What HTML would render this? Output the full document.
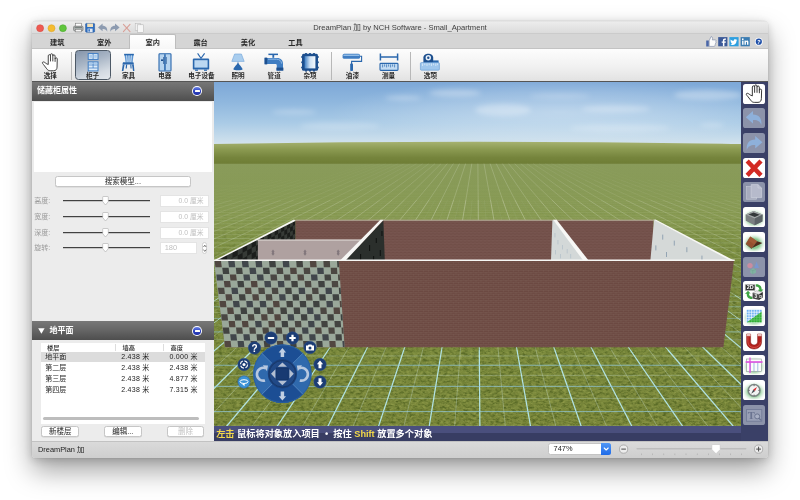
<!DOCTYPE html>
<html lang="zh-CN"><head><meta charset="utf-8"><title>DreamPlan 加 by NCH Software - Small_Apartment</title>
<style>
*{box-sizing:border-box;margin:0;padding:0}
html,body{width:800px;height:500px;overflow:hidden;background:#fff}
body{font-family:"Liberation Sans","Noto Sans CJK SC",sans-serif;position:relative;color:#222}
#win{position:absolute;left:32px;top:21px;width:736px;height:437px;border-radius:4px 4px 3px 3px;background:#ececec;
 box-shadow:0 0 0 0.5px rgba(0,0,0,.07),0 13px 27px rgba(0,0,0,.36),0 2px 10px rgba(0,0,0,.17);overflow:hidden;will-change:transform}
.abs{position:absolute}
#title{left:0;top:0;width:736px;height:13px;background:linear-gradient(#dedede,#ececec 9%,#ebebeb 14%,#dbdbdb);border-bottom:1px solid #cbcbcb}
#title .t{position:absolute;left:0;width:736px;top:2.4px;text-align:center;font-size:7.6px;color:#404040;line-height:10px;white-space:nowrap}
.tl{position:absolute;top:3.2px;width:7.4px;height:7.4px;border-radius:50%}
#tabs{left:0;top:13px;width:736px;height:15px;background:#d5d5d5;border-bottom:1px solid #c3c3c3}
.tab{position:absolute;top:0.5px;height:15px;width:46px;text-align:center;font-size:7.2px;font-weight:700;color:#2a2a2a;line-height:15.5px;white-space:nowrap}
.tab.on{background:linear-gradient(#fff,#f7f7f7);border:0.5px solid #bdbdbd;border-bottom:none;border-radius:2px 2px 0 0;top:0.4px;height:14.6px;line-height:15.6px}
#tools{z-index:5;left:0;top:28px;width:736px;height:33px;background:linear-gradient(#fdfdfd,#f1f1f1 55%,#e2e2e2);border-bottom:1px solid #555}
.tb{position:absolute;top:0;height:33px;width:36px;text-align:center}
.tb .lb{position:absolute;left:-10px;right:-10px;top:21.8px;font-size:6.6px;font-weight:700;color:#2c2c2c;line-height:9px;white-space:nowrap}
.tb svg{position:absolute;left:50%;top:3.9px;margin-left:-11px}
.tb.sel{top:1.2px;height:29.8px;border:1px solid #4d5966;border-radius:3.5px;background:linear-gradient(160deg,#8494aa 0%,#a9b6c6 40%,#d3dae2 75%,#e4e8ed 100%)}
.tb.sel svg{top:1.8px}.tb.sel .lb{top:19.7px}
.sep{position:absolute;top:2.6px;width:1px;height:28.6px;background:#b8b8b8}
#left{left:0;top:60px;width:182px;height:360px;background:#ececec}
.hdr{position:absolute;left:0;width:182px;height:19.5px;background:linear-gradient(#787878,#656565 50%,#4e4e4e);color:#fff;font-weight:700;font-size:8px;line-height:19.6px;padding-left:5px;white-space:nowrap}
.col{position:absolute;right:12px;top:5.1px;width:9.8px;height:9.8px;border-radius:50%;background:#fff}
.col i{position:absolute;left:1.1px;top:1.1px;width:7.6px;height:7.6px;border-radius:50%;background:linear-gradient(#6f86e6,#3148c4 45%,#1f2fa6)}
.col b{position:absolute;left:2.5px;top:3.9px;width:4.8px;height:2px;background:#fff;border-radius:0.5px}
#prev{left:2.4px;top:20.6px;width:177.6px;height:70.4px;background:#fff}
.btn{position:absolute;height:11px;border-radius:2.5px;background:#fff;border:0.5px solid #c6c6c6;box-shadow:0 0.5px 0.5px rgba(0,0,0,.12);font-size:7.5px;text-align:center;line-height:10px;color:#222;white-space:nowrap}
.btn.dis{color:#c2c2c2}
.row{position:absolute;left:0;width:182px;height:14px}
.row .l{position:absolute;left:2.2px;top:2px;font-size:7px;color:#9a9a9a;line-height:10px;white-space:nowrap}
.row .trk{position:absolute;left:31px;top:6px;width:86.5px;height:1px;background:#414141;box-shadow:0 1px 0 rgba(0,0,0,.16)}
.row .th{position:absolute;left:69.8px;top:2px;width:7px;height:10px}
.row .in{position:absolute;left:127.5px;top:1px;width:49.5px;height:11.6px;background:#fff;border:0.5px solid #e4e4e4;font-size:6.8px;color:#c0c0c0;text-align:right;padding-right:4.5px;line-height:10.8px;white-space:nowrap}
#tbl{left:8.6px;top:262px;width:164.4px;height:80.6px;background:#fff}
#tbl .h{position:absolute;top:0.4px;height:9px;font-size:6.2px;font-weight:500;color:#2a2a2a;line-height:9.5px;white-space:nowrap}
#tbl .r{position:absolute;left:0;width:164.4px;height:9.8px;font-size:7px;color:#1c1c1c;line-height:10px;white-space:nowrap}
#tbl .r span{position:absolute;top:0}
#view{left:182px;top:60px;width:527px;height:345px;background:#6f8036;overflow:hidden}
#info{left:182px;top:405px;width:554px;height:15px;background:linear-gradient(#4a4f7d,#4a4f7d 6.6px,#383d63 7.2px,#383d63);color:#fff;font-size:9.2px;font-weight:700;line-height:16.4px;white-space:nowrap;padding-left:2.2px}
#info em{font-style:normal;color:#f2d84a}
#rt{left:709px;top:60px;width:27px;height:360px;background:#3a4067}
.rb{position:absolute;left:1.6px;width:22.2px;height:20px;border-radius:2.6px;background:#fff;overflow:hidden}
.rb.dis{background:#8c93aa}
.rb svg{position:absolute;left:0;top:0}
#status{left:0;top:420px;width:736px;height:17px;background:linear-gradient(#dadada,#cecece);border-top:1px solid #c2c2c2;font-size:7.4px;color:#222;line-height:16px}
</style></head><body>
<div id="win"><div class="abs" style="left:0;top:0;width:736px;height:437px">
<div id="title" class="abs"><svg class="abs" style="left:0;top:0" width="40" height="13" viewBox="0 0 40 13"><circle cx="8.1" cy="7.2" r="3.5" fill="#ee5a52" stroke="#d7443d" stroke-width="0.5"/><circle cx="19.5" cy="7.2" r="3.5" fill="#f5bc30" stroke="#d9a023" stroke-width="0.5"/><circle cx="30.9" cy="7.2" r="3.5" fill="#5fc53c" stroke="#47a52a" stroke-width="0.5"/></svg><svg class="abs" style="left:38px;top:1px" width="80" height="12" viewBox="70 22 80 12"><rect x="75.3" y="23.2" width="6" height="3.4" fill="#fdfdfd" stroke="#777" stroke-width="0.6"/><rect x="73.6" y="26.2" width="9.4" height="4.6" rx="1" fill="#b9bcbc" stroke="#5c6060" stroke-width="0.6"/><rect x="75.2" y="29.3" width="6.2" height="2.6" fill="#f4f4f4" stroke="#6a6a6a" stroke-width="0.5"/><rect x="74.6" y="27.3" width="7.4" height="0.9" fill="#5d6a66"/><rect x="85.6" y="23.4" width="9" height="8.8" rx="0.8" fill="#2f6fc0" stroke="#1d4f96" stroke-width="0.5"/><rect x="87.2" y="23.6" width="5.8" height="3.4" fill="#f1dfb8"/><rect x="87.6" y="28.6" width="5" height="3.4" fill="#dfe8f4"/><rect x="88.4" y="29.2" width="1.5" height="2.4" fill="#2f6fc0"/><path d="M98 27.4 L102.6 23.6 V25.8 C106 25.8 107.6 28 107.2 31.8 C106.4 29.6 105 28.9 102.6 29 V31.2Z" fill="#8d9bb0"/><path d="M119.6 27.4 L115 23.6 V25.8 C111.6 25.8 110 28 110.4 31.8 C111.2 29.6 112.6 28.9 115 29 V31.2Z" fill="#8d9bb0"/><path d="M123.4 24.4 L130 31.6 M130 24.4 L123.4 31.6" stroke="#d9a199" stroke-width="1.1" stroke-linecap="round"/><rect x="135.2" y="23.4" width="5.4" height="7" fill="#f0f0f0" stroke="#b4b4b4" stroke-width="0.5"/><rect x="137.6" y="24.8" width="6" height="7.6" fill="#f6f6f6" stroke="#b0b0b0" stroke-width="0.5"/></svg><div class="t">DreamPlan 加 by NCH Software - Small_Apartment</div></div>
<div id="tabs" class="abs"><div class="tab" style="left:2.2px;width:46px">建筑</div><div class="tab" style="left:49.3px;width:46px">室外</div><div class="tab on" style="left:97.4px;width:46.6px">室内</div><div class="tab" style="left:145.6px;width:46px">露台</div><div class="tab" style="left:193.0px;width:46px">美化</div><div class="tab" style="left:240.4px;width:46px">工具</div><svg class="abs" style="left:672px;top:0.8px" width="62" height="13" viewBox="704 34.5 62 13"><rect x="706.2" y="40" width="2.6" height="6" fill="#4a66a8"/><path d="M709.2 40.2 L711 36.2 C712.6 35.9 712.8 37.6 712.3 39.4 H715.2 C716.2 39.5 716.3 40.6 715.8 41 C716.3 41.6 716.1 42.5 715.5 42.7 C715.8 43.4 715.5 44.1 715 44.3 C715.2 45.2 714.8 45.8 713.9 45.9 H709.2Z" fill="#fbfbfb" stroke="#7785a4" stroke-width="0.6"/><rect x="718.2" y="36.6" width="9.2" height="9.2" fill="#3b5998"/><path d="M724.4 45.8 V42.3 H725.7 L725.9 40.9 H724.4 V40 C724.4 39.5 724.6 39.3 725.1 39.3 H726 V38 C725.6 37.95 725.2 37.9 724.8 37.9 C723.6 37.9 722.9 38.6 722.9 39.8 V40.9 H721.7 V42.3 H722.9 V45.8Z" fill="#fff"/><rect x="729.4" y="36.6" width="9.2" height="9.2" fill="#2d9fe0"/><path d="M737.3 39.4 C737 39.55 736.7 39.6 736.4 39.65 C736.75 39.45 737 39.1 737.1 38.75 C736.8 38.95 736.45 39.05 736.1 39.15 C735.5 38.5 734.5 38.55 733.95 39.15 C733.6 39.55 733.5 40.05 733.6 40.5 C732.4 40.45 731.4 39.85 730.7 39 C730.3 39.7 730.5 40.5 731.15 40.95 C730.9 40.95 730.7 40.9 730.5 40.75 C730.5 41.5 731 42.1 731.7 42.25 C731.5 42.3 731.25 42.3 731.05 42.3 C731.25 42.9 731.8 43.3 732.4 43.3 C731.8 43.8 731.1 44 730.3 43.9 C732.9 45.5 736.6 44 736.55 40.3 C736.85 40.05 737.1 39.75 737.3 39.4Z" fill="#fff"/><rect x="740.6" y="36.6" width="9.2" height="9.2" fill="#3a7cb2"/><rect x="742.1" y="40.1" width="1.4" height="4.2" fill="#fff"/><circle cx="742.8" cy="38.7" r="0.85" fill="#fff"/><path d="M744.5 40.1 H745.8 V40.7 C746.3 39.8 748.4 39.6 748.4 41.6 V44.3 H747 V42 C747 40.9 745.9 41 745.9 42 V44.3 H744.5Z" fill="#fff"/><circle cx="758.8" cy="41.2" r="3.9" fill="#fff"/><circle cx="758.8" cy="41.2" r="3.1" fill="#1f4fa8"/><text x="758.8" y="43.3" font-family="Liberation Sans, sans-serif" font-size="5.6" font-weight="bold" font-style="italic" fill="#fff" text-anchor="middle">?</text></svg></div>
<div id="tools" class="abs"><div class="tb" style="left:0.3px"><svg width="22" height="19" viewBox="0 0 22 19"><g transform="translate(-0.7 -0.7) scale(1.06)"><path d="M7.4 10.6 C6.3 9.6 4.9 8.6 4.1 9.3 C3.4 10 4.3 10.9 5 11.7 L8 15.6 C8.8 16.8 9.8 17.4 11.2 17.4 H14.6 C16.6 17.4 17.6 16 17.7 14 L17.9 6.2 C17.9 4.9 16 4.9 15.9 6.2 L15.8 3.4 C15.7 2 13.7 2 13.7 3.4 V2.4 C13.6 1 11.5 1 11.5 2.4 V3.2 C11.4 1.9 9.4 1.9 9.4 3.3 L9.4 11.5Z M11.5 3 V8.6 M13.7 3.2 V8.6 M15.85 5.6 V9" fill="#fff" stroke="#3c3c3c" stroke-width="0.9" stroke-linejoin="round"/></g></svg><div class="lb">选择</div></div><div class="tb sel" style="left:42.6px"><svg width="22" height="19" viewBox="0 0 22 19"><rect x="6.2" y="0.6" width="9.8" height="5.8" fill="#dcebf8" stroke="#3d7cc4" stroke-width="1"/><path d="M11.1 0.8V6.2" stroke="#3d7cc4" stroke-width="0.8"/><rect x="7.4" y="2" width="2.6" height="2.8" fill="#a9cbed"/><rect x="12.2" y="2" width="2.6" height="2.8" fill="#a9cbed"/><rect x="6.2" y="8.9" width="9.8" height="9" fill="#dcebf8" stroke="#3d7cc4" stroke-width="1"/><path d="M6.6 12H15.6 M6.6 15H15.6 M11.1 9.2V15" stroke="#3d7cc4" stroke-width="0.75"/><rect x="7.3" y="10" width="2.8" height="1.2" fill="#a9cbed"/><rect x="12.1" y="10" width="2.8" height="1.2" fill="#a9cbed"/></svg><div class="lb">柜子</div></div><div class="tb" style="left:78.6px"><svg width="22" height="19" viewBox="0 0 22 19"><path d="M6.4 1 H15.6 L14.6 9.4 H7.6Z" fill="#5b95d2"/><path d="M6.2 0.8 H15.8 V2.4 H6.2Z" fill="#2a67ad"/><path d="M8.6 2.4 L9.2 9 M11 2.4 V9 M13.4 2.4 L12.8 9" stroke="#dbe9f7" stroke-width="0.9"/><path d="M5 9.2 H15.4 L16 11.4 H4.4Z" fill="#2a67ad"/><path d="M4.8 11.4 L3.8 18 H5.4 L6.6 11.4Z M14 11.4 L15 18 H16.4 L15.8 11.4Z M8 11.4 L7.6 15.4 H8.8 L9.2 11.4Z M12.2 11.4 L12.6 15.4 H13.6 L13.4 11.4Z" fill="#2a67ad"/></svg><div class="lb">家具</div></div><div class="tb" style="left:114.8px"><svg width="22" height="19" viewBox="0 0 22 19"><rect x="5" y="0.7" width="12" height="17.3" rx="0.8" fill="#b7d4ef" stroke="#2a67ad" stroke-width="1.1"/><rect x="10.2" y="1.2" width="1.5" height="16.4" fill="#2a67ad"/><rect x="7" y="6.4" width="2.2" height="1.6" fill="#1d4f8e"/><path d="M9.6 4V11 M12.3 4V11" stroke="#1d4f8e" stroke-width="0.7"/></svg><div class="lb">电器</div></div><div class="tb" style="left:151.4px"><svg width="22" height="19" viewBox="0 0 22 19"><path d="M7.6 0.4 L11 5.4 L14.6 0.4" fill="none" stroke="#2a67ad" stroke-width="1.1"/><rect x="2.8" y="5.6" width="16.4" height="11" rx="1.2" fill="#2a67ad"/><rect x="4.4" y="7.2" width="13.2" height="7.4" fill="#bcd8f2"/><rect x="5" y="16.6" width="3" height="1.2" fill="#2a67ad"/><rect x="14" y="16.6" width="3" height="1.2" fill="#2a67ad"/></svg><div class="lb">电子设备</div></div><div class="tb" style="left:188.0px"><svg width="22" height="19" viewBox="0 0 22 19"><path d="M7.6 1 H14.4 L17.2 8.4 H4.8Z" fill="#a9cdee" stroke="#6fa3d8" stroke-width="0.6"/><path d="M11 8.2 C11.4 11.8 15 13.6 15.6 16.2 C15.6 17.6 6.4 17.6 6.4 16.2 C7 13.6 10.6 11.8 11 8.2Z" fill="#2a67ad"/></svg><div class="lb">照明</div></div><div class="tb" style="left:224.2px"><svg width="22" height="19" viewBox="0 0 22 19"><rect x="5.4" y="0.6" width="9.6" height="1.5" fill="#2a67ad"/><rect x="9.4" y="1.8" width="1.8" height="3" fill="#2a67ad"/><path d="M1.6 5 H14 C18 5 20 7.4 20 11 V17.4 H13.8 V12.4 C13.8 11.4 13.2 11 12.2 11 H1.6Z" fill="#3f7dc2"/><rect x="1.6" y="4.6" width="2.6" height="6.8" fill="#1d4f8e"/><rect x="13.4" y="14.6" width="7" height="3" fill="#1d4f8e"/><path d="M5 6.2 H13.6 C16.6 6.2 18.4 8 18.6 10.6" fill="none" stroke="#8fb9e6" stroke-width="1"/></svg><div class="lb">管道</div></div><div class="tb" style="left:260.0px"><svg width="22" height="19" viewBox="0 0 22 19"><defs><linearGradient id="fg" x1="0" y1="0" x2="1" y2="0"><stop offset="0" stop-color="#3f7fc4"/><stop offset="0.5" stop-color="#cfe2f5"/><stop offset="1" stop-color="#f4f8fc"/></linearGradient></defs><rect x="3" y="0.8" width="16" height="17" rx="1.6" fill="#1d4f8e"/><g fill="#1d4f8e"><circle cx="3.2" cy="4" r="1.1"/><circle cx="3.2" cy="9.3" r="1.1"/><circle cx="3.2" cy="14.6" r="1.1"/><circle cx="18.8" cy="4" r="1.1"/><circle cx="18.8" cy="9.3" r="1.1"/><circle cx="18.8" cy="14.6" r="1.1"/><circle cx="7" cy="0.9" r="1"/><circle cx="11" cy="0.9" r="1"/><circle cx="15" cy="0.9" r="1"/><circle cx="7" cy="17.7" r="1"/><circle cx="11" cy="17.7" r="1"/><circle cx="15" cy="17.7" r="1"/></g><rect x="5.6" y="3.2" width="10.8" height="12.2" fill="url(#fg)"/></svg><div class="lb">杂项</div></div><div class="tb" style="left:302.4px"><svg width="22" height="19" viewBox="0 0 22 19"><rect x="1.6" y="0.8" width="17.4" height="5" rx="1.6" fill="#3f7dc2"/><rect x="2.4" y="1.6" width="15.8" height="1.3" fill="#9cc4ea"/><path d="M19 3.2 H20.6 V8.4 H10.6 V11" fill="none" stroke="#2a67ad" stroke-width="1.1"/><rect x="9.2" y="10.4" width="2.8" height="7.6" rx="0.8" fill="#2a67ad"/></svg><div class="lb">油漆</div></div><div class="tb" style="left:338.6px"><svg width="22" height="19" viewBox="0 0 22 19"><path d="M2.4 0.6 V7.4 M19.6 0.6 V7.4 M2.4 4 H19.6" fill="none" stroke="#2a67ad" stroke-width="1.5"/><rect x="2" y="10.4" width="18" height="7" rx="0.8" fill="#c3dcf3" stroke="#2a67ad" stroke-width="1.1"/><path d="M4.6 11.4V14.4 M6.6 11.4V13.6 M8.6 11.4V14.4 M10.6 11.4V13.6 M12.6 11.4V14.4 M14.6 11.4V13.6 M16.6 11.4V14.4" stroke="#2a67ad" stroke-width="0.7"/></svg><div class="lb">测量</div></div><div class="tb" style="left:380.4px"><svg width="22" height="19" viewBox="0 0 22 19"><path d="M4.4 10 V4.6 C4.4 -0.6 14.2 -0.6 14.2 4.6 V10Z" fill="#1d4f8e"/><circle cx="9.3" cy="4.7" r="2.7" fill="#e9f1fa"/><circle cx="9.3" cy="4.7" r="1.2" fill="#1d4f8e"/><rect x="14" y="7.4" width="5.6" height="2.8" fill="#2a67ad"/><rect x="1.4" y="9.6" width="19" height="7.6" rx="1" fill="#9fc6ec" stroke="#5f97d2" stroke-width="0.6"/><path d="M3.6 10.4V13 M5.8 10.4V12.2 M8 10.4V13 M10.2 10.4V12.2 M12.4 10.4V13 M14.6 10.4V12.2 M16.8 10.4V13 M18.6 10.4V12.2" stroke="#e8f2fb" stroke-width="0.7"/></svg><div class="lb">选项</div></div><div class="sep" style="left:39.3px"></div><div class="sep" style="left:299.3px"></div><div class="sep" style="left:377.6px"></div></div>
<div id="left" class="abs">
<div class="hdr" style="top:0">储藏柜属性<div class="col"><i></i><b></b></div></div>
<div id="prev" class="abs"></div>
<div class="btn" style="left:22.6px;top:95.2px;width:136.6px">搜索模型...</div>
<div class="row" style="top:113.0px"><span class="l">高度:</span><div class="trk"></div><svg class="th" viewBox="0 0 7 10"><path d="M1.4 0.5 H5.6 Q6.3 0.5 6.3 1.2 V5.6 L3.5 9 L0.7 5.6 V1.2 Q0.7 0.5 1.4 0.5Z" fill="#fff" stroke="#a3a3a3" stroke-width="0.55"/></svg><div class="in">0.0 厘米</div></div><div class="row" style="top:129.0px"><span class="l">宽度:</span><div class="trk"></div><svg class="th" viewBox="0 0 7 10"><path d="M1.4 0.5 H5.6 Q6.3 0.5 6.3 1.2 V5.6 L3.5 9 L0.7 5.6 V1.2 Q0.7 0.5 1.4 0.5Z" fill="#fff" stroke="#a3a3a3" stroke-width="0.55"/></svg><div class="in">0.0 厘米</div></div><div class="row" style="top:145.0px"><span class="l">深度:</span><div class="trk"></div><svg class="th" viewBox="0 0 7 10"><path d="M1.4 0.5 H5.6 Q6.3 0.5 6.3 1.2 V5.6 L3.5 9 L0.7 5.6 V1.2 Q0.7 0.5 1.4 0.5Z" fill="#fff" stroke="#a3a3a3" stroke-width="0.55"/></svg><div class="in">0.0 厘米</div></div><div class="row" style="top:160.0px"><span class="l">旋转:</span><div class="trk"></div><svg class="th" viewBox="0 0 7 10"><path d="M1.4 0.5 H5.6 Q6.3 0.5 6.3 1.2 V5.6 L3.5 9 L0.7 5.6 V1.2 Q0.7 0.5 1.4 0.5Z" fill="#fff" stroke="#a3a3a3" stroke-width="0.55"/></svg><div class="in" style="width:37.5px;text-align:left;padding-left:4.2px;font-size:7.5px">180</div><div class="abs" style="left:169.6px;top:0.6px;width:5.6px;height:12.4px;border-radius:2.8px;background:#fff;border:0.5px solid #cfcfcf"></div><svg class="abs" style="left:169.6px;top:0.6px" width="5.6" height="12.4" viewBox="0 0 5.6 12.4"><path d="M1.5 5 L2.8 3.2 L4.1 5 M1.5 7.6 L2.8 9.4 L4.1 7.6" fill="none" stroke="#555" stroke-width="0.8"/></svg></div>
<div class="hdr" style="top:240px;height:19px;line-height:19px;padding-left:7px"><svg class="abs" style="left:5.6px;top:6.6px" width="7" height="6" viewBox="0 0 7 6"><path d="M0.2 0.3 H6.6 L3.4 5.7Z" fill="#fff"/></svg><span style="position:absolute;left:17.4px">地平面</span><div class="col"><i></i><b></b></div></div>
<div id="tbl" class="abs"><span class="h" style="left:6.4px">楼层</span><span class="h" style="left:82px">墙高</span><span class="h" style="left:130px">高度</span><div class="abs" style="left:74.6px;top:1.4px;width:0.6px;height:7px;background:#ddd"></div><div class="abs" style="left:122.6px;top:1.4px;width:0.6px;height:7px;background:#ddd"></div><div class="r" style="top:9.40px;background:#dcdcdc;"><span style="left:4.6px">地平面</span><span style="left:80.6px;letter-spacing:0.28px">2.438 米</span><span style="left:128.8px;letter-spacing:0.28px">0.000 米</span></div><div class="r" style="top:20.40px;"><span style="left:4.6px">第二层</span><span style="left:80.6px;letter-spacing:0.28px">2.438 米</span><span style="left:128.8px;letter-spacing:0.28px">2.438 米</span></div><div class="r" style="top:31.40px;"><span style="left:4.6px">第三层</span><span style="left:80.6px;letter-spacing:0.28px">2.438 米</span><span style="left:128.8px;letter-spacing:0.28px">4.877 米</span></div><div class="r" style="top:42.40px;"><span style="left:4.6px">第四层</span><span style="left:80.6px;letter-spacing:0.28px">2.438 米</span><span style="left:128.8px;letter-spacing:0.28px">7.315 米</span></div><div class="abs" style="left:2px;top:73.6px;width:156px;height:3.6px;border-radius:2px;background:#bdbdbd"></div></div>
<div class="btn" style="left:9px;top:344.6px;width:38.4px">新楼层</div>
<div class="btn" style="left:71.6px;top:344.6px;width:38.4px">编辑...</div>
<div class="btn dis" style="left:134.6px;top:344.6px;width:37.6px">删除</div>
</div>
<div id="view" class="abs"><svg id="scene" width="527" height="346" viewBox="214 81 527 346">
<defs>
<linearGradient id="sky" x1="0" y1="0" x2="0" y2="1">
<stop offset="0" stop-color="#7ca7d7"/><stop offset="0.3" stop-color="#8fb7de"/><stop offset="0.6" stop-color="#aacbe6"/><stop offset="0.85" stop-color="#ccdfec"/><stop offset="1" stop-color="#e0e9ee"/>
</linearGradient>
<radialGradient id="hz" cx="0.5" cy="0.5" r="0.5"><stop offset="0" stop-color="#fff" stop-opacity="0.34"/><stop offset="0.6" stop-color="#fff" stop-opacity="0.16"/><stop offset="1" stop-color="#fff" stop-opacity="0"/></radialGradient>
<linearGradient id="grassfar" x1="0" y1="0" x2="0" y2="1">
<stop offset="0" stop-color="#a6b270"/><stop offset="0.3" stop-color="#8c9b52"/><stop offset="0.65" stop-color="#75843c"/><stop offset="1" stop-color="#6c7b33"/>
</linearGradient>
<linearGradient id="grass" x1="0" y1="0" x2="0" y2="1">
<stop offset="0" stop-color="#798d44"/><stop offset="0.2" stop-color="#7e9245"/><stop offset="0.42" stop-color="#7a8c3f"/><stop offset="1" stop-color="#79863a"/>
</linearGradient>
<filter id="blur3" x="-20%" y="-50%" width="140%" height="200%"><feGaussianBlur stdDeviation="2.6"/></filter>
<filter id="gnoise" x="0" y="0" width="100%" height="100%" color-interpolation-filters="sRGB">
<feTurbulence type="fractalNoise" baseFrequency="0.22 0.42" numOctaves="3" seed="7" result="n"/>
<feColorMatrix in="n" type="matrix" values="0 0 0 0 0.30  0 0 0 0 0.37  0 0 0 0 0.12  2.6 1.4 0 0 -1.75"/>
</filter>
<filter id="gnoise2" x="0" y="0" width="100%" height="100%" color-interpolation-filters="sRGB">
<feTurbulence type="fractalNoise" baseFrequency="0.3 0.5" numOctaves="2" seed="21" result="n"/>
<feColorMatrix in="n" type="matrix" values="0 0 0 0 0.62  0 0 0 0 0.66  0 0 0 0 0.33  0 2.4 1.2 0 -1.6"/>
</filter>
<linearGradient id="haze" x1="0" y1="0" x2="0" y2="1"><stop offset="0" stop-color="#dfe6d2" stop-opacity="0.16"/><stop offset="0.6" stop-color="#dfe6d2" stop-opacity="0.08"/><stop offset="1" stop-color="#dfe6d2" stop-opacity="0"/></linearGradient>
<linearGradient id="fade" x1="0" y1="0" x2="0" y2="1"><stop offset="0" stop-color="#fff" stop-opacity="0"/><stop offset="0.45" stop-color="#fff" stop-opacity="0.75"/><stop offset="1" stop-color="#fff" stop-opacity="1"/></linearGradient>
<mask id="fm" maskUnits="userSpaceOnUse" x="214" y="200" width="527" height="227"><rect x="214" y="200" width="527" height="227" fill="url(#fade)"/></mask>
<pattern id="brick" width="5" height="4" patternUnits="userSpaceOnUse">
<rect width="5" height="4" fill="#6c4942"/>
<path d="M0 0.3H5M0 2.3H5" stroke="#85675e" stroke-width="0.5" opacity="0.6"/>
<path d="M1 0V2M3.5 2V4" stroke="#80635b" stroke-width="0.5" opacity="0.5"/>
</pattern>
<pattern id="brickb" width="4" height="3.2" patternUnits="userSpaceOnUse">
<rect width="4" height="3.2" fill="#6f4c46"/>
<path d="M0 0.3H4M0 1.9H4" stroke="#87685f" stroke-width="0.45" opacity="0.65"/>
<path d="M1 0V1.6M3 1.6V3.2" stroke="#83655c" stroke-width="0.45" opacity="0.5"/>
</pattern>
</defs>
<rect x="214" y="81" width="527" height="70" fill="url(#sky)"/>
<ellipse cx="560" cy="112" rx="230" ry="34" fill="url(#hz)"/>
<g filter="url(#blur3)" fill="#fff">
<ellipse cx="403" cy="98" rx="18" ry="2.2" opacity="0.3"/>
<ellipse cx="294" cy="112" rx="22" ry="2.6" opacity="0.25"/>
<ellipse cx="455" cy="93" rx="26" ry="3.5" opacity="0.3"/>
<ellipse cx="503" cy="110" rx="28" ry="6" opacity="0.3"/>
<ellipse cx="616" cy="109" rx="34" ry="3.6" opacity="0.28"/>
<ellipse cx="708" cy="95" rx="34" ry="5" opacity="0.3"/>
<ellipse cx="712" cy="125" rx="12" ry="2" opacity="0.25"/>
<ellipse cx="560" cy="96" rx="30" ry="3" opacity="0.18"/>
<ellipse cx="340" cy="126" rx="40" ry="4" opacity="0.2"/>
<ellipse cx="620" cy="128" rx="50" ry="4" opacity="0.2"/>
</g>
<path d="M214 144 Q477 139.5 741 144 V166 H214Z" fill="url(#grassfar)"/>
<rect x="214" y="164" width="527" height="263" fill="url(#grass)"/>
<g mask="url(#fm)"><rect x="214" y="200" width="527" height="227" filter="url(#gnoise)" opacity="0.8"/><rect x="214" y="200" width="527" height="227" filter="url(#gnoise2)" opacity="0.55"/></g>
<rect x="214" y="163.6" width="527" height="90" fill="url(#haze)"/>
<g fill="none"><line x1="255.4" y1="180" x2="170.7" y2="200" stroke="#f0f4e8" stroke-width="0.60" opacity="0.04"/><line x1="264.3" y1="180" x2="183.0" y2="200" stroke="#f0f4e8" stroke-width="0.60" opacity="0.05"/><line x1="273.2" y1="180" x2="195.3" y2="200" stroke="#f0f4e8" stroke-width="0.60" opacity="0.05"/><line x1="282.1" y1="180" x2="207.6" y2="200" stroke="#f0f4e8" stroke-width="0.60" opacity="0.06"/><line x1="291.0" y1="180" x2="219.9" y2="200" stroke="#f0f4e8" stroke-width="0.60" opacity="0.06"/><line x1="219.9" y1="200" x2="155.9" y2="218" stroke="#eef3e6" stroke-width="0.70" opacity="0.13"/><line x1="299.9" y1="180" x2="232.2" y2="200" stroke="#f0f4e8" stroke-width="0.60" opacity="0.07"/><line x1="232.2" y1="200" x2="171.3" y2="218" stroke="#eef3e6" stroke-width="0.70" opacity="0.14"/><line x1="308.8" y1="180" x2="244.5" y2="200" stroke="#f0f4e8" stroke-width="0.60" opacity="0.07"/><line x1="244.5" y1="200" x2="186.6" y2="218" stroke="#eef3e6" stroke-width="0.70" opacity="0.15"/><line x1="367.7" y1="163.6" x2="317.7" y2="180" stroke="#f0f4e8" stroke-width="0.60" opacity="0.04"/><line x1="317.7" y1="180" x2="256.8" y2="200" stroke="#f0f4e8" stroke-width="0.60" opacity="0.08"/><line x1="256.8" y1="200" x2="202.0" y2="218" stroke="#eef3e6" stroke-width="0.70" opacity="0.16"/><line x1="373.8" y1="163.6" x2="326.6" y2="180" stroke="#f0f4e8" stroke-width="0.60" opacity="0.05"/><line x1="326.6" y1="180" x2="269.1" y2="200" stroke="#f0f4e8" stroke-width="0.60" opacity="0.09"/><line x1="269.1" y1="200" x2="217.3" y2="218" stroke="#eef3e6" stroke-width="0.70" opacity="0.18"/><line x1="217.3" y1="218" x2="168.4" y2="235" stroke="#eef3e6" stroke-width="0.70" opacity="0.23"/><line x1="379.9" y1="163.6" x2="335.5" y2="180" stroke="#f0f4e8" stroke-width="0.60" opacity="0.06"/><line x1="335.5" y1="180" x2="281.4" y2="200" stroke="#f0f4e8" stroke-width="0.60" opacity="0.10"/><line x1="281.4" y1="200" x2="232.7" y2="218" stroke="#eef3e6" stroke-width="0.70" opacity="0.20"/><line x1="232.7" y1="218" x2="186.7" y2="235" stroke="#eef3e6" stroke-width="0.70" opacity="0.25"/><line x1="386.0" y1="163.6" x2="344.4" y2="180" stroke="#f0f4e8" stroke-width="0.60" opacity="0.07"/><line x1="344.4" y1="180" x2="293.7" y2="200" stroke="#f0f4e8" stroke-width="0.60" opacity="0.11"/><line x1="293.7" y1="200" x2="248.0" y2="218" stroke="#eef3e6" stroke-width="0.70" opacity="0.22"/><line x1="248.0" y1="218" x2="204.9" y2="235" stroke="#eef3e6" stroke-width="0.70" opacity="0.26"/><line x1="214.0" y1="235" x2="177.2" y2="250" stroke="#d8f0ee" stroke-width="0.48" opacity="0.05"/><line x1="392.1" y1="163.6" x2="353.3" y2="180" stroke="#f0f4e8" stroke-width="0.60" opacity="0.07"/><line x1="353.3" y1="180" x2="306.0" y2="200" stroke="#f0f4e8" stroke-width="0.60" opacity="0.13"/><line x1="306.0" y1="200" x2="263.4" y2="218" stroke="#eef3e6" stroke-width="0.70" opacity="0.24"/><line x1="263.4" y1="218" x2="223.1" y2="235" stroke="#eef3e6" stroke-width="0.70" opacity="0.26"/><line x1="223.1" y1="235" x2="187.6" y2="250" stroke="#e3f0e6" stroke-width="0.80" opacity="0.29"/><line x1="232.3" y1="235" x2="198.0" y2="250" stroke="#d8f0ee" stroke-width="0.48" opacity="0.05"/><line x1="398.3" y1="163.6" x2="362.2" y2="180" stroke="#f0f4e8" stroke-width="0.60" opacity="0.09"/><line x1="362.2" y1="180" x2="318.3" y2="200" stroke="#f0f4e8" stroke-width="0.60" opacity="0.14"/><line x1="318.3" y1="200" x2="278.7" y2="218" stroke="#eef3e6" stroke-width="0.70" opacity="0.27"/><line x1="278.7" y1="218" x2="241.4" y2="235" stroke="#eef3e6" stroke-width="0.70" opacity="0.27"/><line x1="241.4" y1="235" x2="208.4" y2="250" stroke="#e3f0e6" stroke-width="0.80" opacity="0.29"/><line x1="286.4" y1="218" x2="250.5" y2="235" stroke="#d8f0ee" stroke-width="0.42" opacity="0.04"/><line x1="250.5" y1="235" x2="218.8" y2="250" stroke="#d8f0ee" stroke-width="0.48" opacity="0.06"/><line x1="218.8" y1="250" x2="187.1" y2="265" stroke="#d8f0ee" stroke-width="0.48" opacity="0.07"/><line x1="404.4" y1="163.6" x2="371.1" y2="180" stroke="#f0f4e8" stroke-width="0.60" opacity="0.10"/><line x1="371.1" y1="180" x2="330.6" y2="200" stroke="#f0f4e8" stroke-width="0.60" opacity="0.16"/><line x1="330.6" y1="200" x2="294.1" y2="218" stroke="#eef3e6" stroke-width="0.70" opacity="0.28"/><line x1="294.1" y1="218" x2="259.6" y2="235" stroke="#eef3e6" stroke-width="0.70" opacity="0.28"/><line x1="259.6" y1="235" x2="229.2" y2="250" stroke="#e3f0e6" stroke-width="0.80" opacity="0.30"/><line x1="229.2" y1="250" x2="198.8" y2="265" stroke="#e3f0e6" stroke-width="0.80" opacity="0.30"/><line x1="301.8" y1="218" x2="268.7" y2="235" stroke="#d8f0ee" stroke-width="0.42" opacity="0.05"/><line x1="268.7" y1="235" x2="239.6" y2="250" stroke="#d8f0ee" stroke-width="0.48" opacity="0.07"/><line x1="239.6" y1="250" x2="210.4" y2="265" stroke="#d8f0ee" stroke-width="0.48" opacity="0.08"/><line x1="410.5" y1="163.6" x2="380.0" y2="180" stroke="#f0f4e8" stroke-width="0.60" opacity="0.11"/><line x1="380.0" y1="180" x2="342.9" y2="200" stroke="#f0f4e8" stroke-width="0.60" opacity="0.18"/><line x1="342.9" y1="200" x2="309.4" y2="218" stroke="#eef3e6" stroke-width="0.70" opacity="0.29"/><line x1="309.4" y1="218" x2="277.8" y2="235" stroke="#eef3e6" stroke-width="0.70" opacity="0.29"/><line x1="277.8" y1="235" x2="250.0" y2="250" stroke="#e3f0e6" stroke-width="0.80" opacity="0.32"/><line x1="250.0" y1="250" x2="222.1" y2="265" stroke="#e3f0e6" stroke-width="0.80" opacity="0.32"/><line x1="222.1" y1="265" x2="194.2" y2="280" stroke="#cdeeea" stroke-width="0.85" opacity="0.33"/><line x1="349.0" y1="200" x2="317.1" y2="218" stroke="#d8f0ee" stroke-width="0.42" opacity="0.04"/><line x1="317.1" y1="218" x2="287.0" y2="235" stroke="#d8f0ee" stroke-width="0.42" opacity="0.06"/><line x1="287.0" y1="235" x2="260.4" y2="250" stroke="#d8f0ee" stroke-width="0.48" opacity="0.08"/><line x1="260.4" y1="250" x2="233.8" y2="265" stroke="#d8f0ee" stroke-width="0.48" opacity="0.09"/><line x1="233.8" y1="265" x2="207.2" y2="280" stroke="#d8f0ee" stroke-width="0.51" opacity="0.10"/><line x1="416.6" y1="163.6" x2="388.9" y2="180" stroke="#f0f4e8" stroke-width="0.60" opacity="0.13"/><line x1="388.9" y1="180" x2="355.2" y2="200" stroke="#f0f4e8" stroke-width="0.60" opacity="0.21"/><line x1="355.2" y1="200" x2="324.8" y2="218" stroke="#eef3e6" stroke-width="0.70" opacity="0.30"/><line x1="324.8" y1="218" x2="296.1" y2="235" stroke="#eef3e6" stroke-width="0.70" opacity="0.30"/><line x1="296.1" y1="235" x2="270.7" y2="250" stroke="#e3f0e6" stroke-width="0.80" opacity="0.33"/><line x1="270.7" y1="250" x2="245.4" y2="265" stroke="#e3f0e6" stroke-width="0.80" opacity="0.33"/><line x1="245.4" y1="265" x2="220.1" y2="280" stroke="#cdeeea" stroke-width="0.85" opacity="0.34"/><line x1="220.1" y1="280" x2="194.8" y2="295" stroke="#cdeeea" stroke-width="0.85" opacity="0.34"/><line x1="361.3" y1="200" x2="332.5" y2="218" stroke="#d8f0ee" stroke-width="0.42" opacity="0.05"/><line x1="332.5" y1="218" x2="305.2" y2="235" stroke="#d8f0ee" stroke-width="0.42" opacity="0.07"/><line x1="305.2" y1="235" x2="281.1" y2="250" stroke="#d8f0ee" stroke-width="0.48" opacity="0.09"/><line x1="281.1" y1="250" x2="257.1" y2="265" stroke="#d8f0ee" stroke-width="0.48" opacity="0.10"/><line x1="257.1" y1="265" x2="233.0" y2="280" stroke="#d8f0ee" stroke-width="0.51" opacity="0.10"/><line x1="233.0" y1="280" x2="209.0" y2="295" stroke="#d8f0ee" stroke-width="0.51" opacity="0.10"/><line x1="422.8" y1="163.6" x2="397.9" y2="180" stroke="#f0f4e8" stroke-width="0.60" opacity="0.15"/><line x1="397.9" y1="180" x2="367.5" y2="200" stroke="#f0f4e8" stroke-width="0.60" opacity="0.23"/><line x1="367.5" y1="200" x2="340.1" y2="218" stroke="#eef3e6" stroke-width="0.70" opacity="0.32"/><line x1="340.1" y1="218" x2="314.3" y2="235" stroke="#eef3e6" stroke-width="0.70" opacity="0.32"/><line x1="314.3" y1="235" x2="291.5" y2="250" stroke="#e3f0e6" stroke-width="0.80" opacity="0.34"/><line x1="291.5" y1="250" x2="268.7" y2="265" stroke="#e3f0e6" stroke-width="0.80" opacity="0.34"/><line x1="268.7" y1="265" x2="246.0" y2="280" stroke="#cdeeea" stroke-width="0.85" opacity="0.36"/><line x1="246.0" y1="280" x2="223.2" y2="295" stroke="#cdeeea" stroke-width="0.85" opacity="0.36"/><line x1="223.2" y1="295" x2="200.4" y2="310" stroke="#c2eef0" stroke-width="0.95" opacity="0.70"/><line x1="373.6" y1="200" x2="347.8" y2="218" stroke="#d8f0ee" stroke-width="0.42" opacity="0.06"/><line x1="347.8" y1="218" x2="323.4" y2="235" stroke="#d8f0ee" stroke-width="0.42" opacity="0.08"/><line x1="323.4" y1="235" x2="301.9" y2="250" stroke="#d8f0ee" stroke-width="0.48" opacity="0.10"/><line x1="301.9" y1="250" x2="280.4" y2="265" stroke="#d8f0ee" stroke-width="0.48" opacity="0.11"/><line x1="280.4" y1="265" x2="258.9" y2="280" stroke="#d8f0ee" stroke-width="0.51" opacity="0.11"/><line x1="258.9" y1="280" x2="237.4" y2="295" stroke="#d8f0ee" stroke-width="0.51" opacity="0.11"/><line x1="237.4" y1="295" x2="215.9" y2="310" stroke="#d8f0ee" stroke-width="0.57" opacity="0.21"/><line x1="215.9" y1="310" x2="194.4" y2="325" stroke="#d8f0ee" stroke-width="0.57" opacity="0.21"/><line x1="428.9" y1="163.6" x2="406.8" y2="180" stroke="#f0f4e8" stroke-width="0.60" opacity="0.18"/><line x1="406.8" y1="180" x2="379.8" y2="200" stroke="#f0f4e8" stroke-width="0.60" opacity="0.24"/><line x1="379.8" y1="200" x2="355.5" y2="218" stroke="#eef3e6" stroke-width="0.70" opacity="0.33"/><line x1="355.5" y1="218" x2="332.5" y2="235" stroke="#eef3e6" stroke-width="0.70" opacity="0.33"/><line x1="332.5" y1="235" x2="312.3" y2="250" stroke="#e3f0e6" stroke-width="0.80" opacity="0.36"/><line x1="312.3" y1="250" x2="292.1" y2="265" stroke="#e3f0e6" stroke-width="0.80" opacity="0.36"/><line x1="292.1" y1="265" x2="271.8" y2="280" stroke="#cdeeea" stroke-width="0.85" opacity="0.37"/><line x1="271.8" y1="280" x2="251.6" y2="295" stroke="#cdeeea" stroke-width="0.85" opacity="0.37"/><line x1="251.6" y1="295" x2="231.3" y2="310" stroke="#c2eef0" stroke-width="0.95" opacity="0.70"/><line x1="231.3" y1="310" x2="211.1" y2="325" stroke="#c2eef0" stroke-width="0.95" opacity="0.70"/><line x1="385.9" y1="200" x2="363.2" y2="218" stroke="#d8f0ee" stroke-width="0.42" opacity="0.07"/><line x1="363.2" y1="218" x2="341.7" y2="235" stroke="#d8f0ee" stroke-width="0.42" opacity="0.09"/><line x1="341.7" y1="235" x2="322.7" y2="250" stroke="#d8f0ee" stroke-width="0.48" opacity="0.11"/><line x1="322.7" y1="250" x2="303.7" y2="265" stroke="#d8f0ee" stroke-width="0.48" opacity="0.11"/><line x1="303.7" y1="265" x2="284.8" y2="280" stroke="#d8f0ee" stroke-width="0.51" opacity="0.11"/><line x1="284.8" y1="280" x2="265.8" y2="295" stroke="#d8f0ee" stroke-width="0.51" opacity="0.11"/><line x1="265.8" y1="295" x2="246.8" y2="310" stroke="#d8f0ee" stroke-width="0.57" opacity="0.21"/><line x1="246.8" y1="310" x2="227.9" y2="325" stroke="#d8f0ee" stroke-width="0.57" opacity="0.21"/><line x1="227.9" y1="325" x2="196.2" y2="350" stroke="#d8f0ee" stroke-width="0.66" opacity="0.35"/><line x1="435.0" y1="163.6" x2="415.7" y2="180" stroke="#f0f4e8" stroke-width="0.60" opacity="0.21"/><line x1="415.7" y1="180" x2="392.1" y2="200" stroke="#f0f4e8" stroke-width="0.60" opacity="0.26"/><line x1="392.1" y1="200" x2="370.8" y2="218" stroke="#eef3e6" stroke-width="0.70" opacity="0.35"/><line x1="370.8" y1="218" x2="350.8" y2="235" stroke="#eef3e6" stroke-width="0.70" opacity="0.35"/><line x1="350.8" y1="235" x2="333.1" y2="250" stroke="#e3f0e6" stroke-width="0.80" opacity="0.38"/><line x1="333.1" y1="250" x2="315.4" y2="265" stroke="#e3f0e6" stroke-width="0.80" opacity="0.38"/><line x1="315.4" y1="265" x2="297.7" y2="280" stroke="#cdeeea" stroke-width="0.85" opacity="0.39"/><line x1="297.7" y1="280" x2="280.0" y2="295" stroke="#cdeeea" stroke-width="0.85" opacity="0.39"/><line x1="280.0" y1="295" x2="262.3" y2="310" stroke="#c2eef0" stroke-width="0.95" opacity="0.70"/><line x1="262.3" y1="310" x2="244.6" y2="325" stroke="#c2eef0" stroke-width="0.95" opacity="0.70"/><line x1="244.6" y1="325" x2="215.1" y2="350" stroke="#b9ebf1" stroke-width="1.10" opacity="0.84"/><line x1="215.1" y1="350" x2="120.7" y2="430" stroke="#b6eaf2" stroke-width="1.25" opacity="0.92"/><line x1="398.2" y1="200" x2="378.5" y2="218" stroke="#d8f0ee" stroke-width="0.42" opacity="0.08"/><line x1="378.5" y1="218" x2="359.9" y2="235" stroke="#d8f0ee" stroke-width="0.42" opacity="0.11"/><line x1="359.9" y1="235" x2="343.5" y2="250" stroke="#d8f0ee" stroke-width="0.48" opacity="0.12"/><line x1="343.5" y1="250" x2="327.0" y2="265" stroke="#d8f0ee" stroke-width="0.48" opacity="0.12"/><line x1="327.0" y1="265" x2="310.6" y2="280" stroke="#d8f0ee" stroke-width="0.51" opacity="0.12"/><line x1="310.6" y1="280" x2="294.2" y2="295" stroke="#d8f0ee" stroke-width="0.51" opacity="0.12"/><line x1="294.2" y1="295" x2="277.8" y2="310" stroke="#d8f0ee" stroke-width="0.57" opacity="0.21"/><line x1="277.8" y1="310" x2="261.4" y2="325" stroke="#d8f0ee" stroke-width="0.57" opacity="0.21"/><line x1="261.4" y1="325" x2="234.0" y2="350" stroke="#d8f0ee" stroke-width="0.66" opacity="0.35"/><line x1="234.0" y1="350" x2="146.4" y2="430" stroke="#d8f0ee" stroke-width="0.75" opacity="0.39"/><line x1="441.1" y1="163.6" x2="424.6" y2="180" stroke="#f0f4e8" stroke-width="0.60" opacity="0.24"/><line x1="424.6" y1="180" x2="404.4" y2="200" stroke="#f0f4e8" stroke-width="0.60" opacity="0.27"/><line x1="404.4" y1="200" x2="386.2" y2="218" stroke="#eef3e6" stroke-width="0.70" opacity="0.36"/><line x1="386.2" y1="218" x2="369.0" y2="235" stroke="#eef3e6" stroke-width="0.70" opacity="0.36"/><line x1="369.0" y1="235" x2="353.9" y2="250" stroke="#e3f0e6" stroke-width="0.80" opacity="0.40"/><line x1="353.9" y1="250" x2="338.7" y2="265" stroke="#e3f0e6" stroke-width="0.80" opacity="0.40"/><line x1="338.7" y1="265" x2="323.6" y2="280" stroke="#cdeeea" stroke-width="0.85" opacity="0.41"/><line x1="323.6" y1="280" x2="308.4" y2="295" stroke="#cdeeea" stroke-width="0.85" opacity="0.41"/><line x1="308.4" y1="295" x2="293.3" y2="310" stroke="#c2eef0" stroke-width="0.95" opacity="0.70"/><line x1="293.3" y1="310" x2="278.1" y2="325" stroke="#c2eef0" stroke-width="0.95" opacity="0.70"/><line x1="278.1" y1="325" x2="252.9" y2="350" stroke="#b9ebf1" stroke-width="1.10" opacity="0.84"/><line x1="252.9" y1="350" x2="172.0" y2="430" stroke="#b6eaf2" stroke-width="1.25" opacity="0.92"/><line x1="410.5" y1="200" x2="393.9" y2="218" stroke="#d8f0ee" stroke-width="0.42" opacity="0.10"/><line x1="393.9" y1="218" x2="378.1" y2="235" stroke="#d8f0ee" stroke-width="0.42" opacity="0.11"/><line x1="378.1" y1="235" x2="364.3" y2="250" stroke="#d8f0ee" stroke-width="0.48" opacity="0.12"/><line x1="364.3" y1="250" x2="350.4" y2="265" stroke="#d8f0ee" stroke-width="0.48" opacity="0.12"/><line x1="350.4" y1="265" x2="336.5" y2="280" stroke="#d8f0ee" stroke-width="0.51" opacity="0.13"/><line x1="336.5" y1="280" x2="322.6" y2="295" stroke="#d8f0ee" stroke-width="0.51" opacity="0.13"/><line x1="322.6" y1="295" x2="308.7" y2="310" stroke="#d8f0ee" stroke-width="0.57" opacity="0.21"/><line x1="308.7" y1="310" x2="294.9" y2="325" stroke="#d8f0ee" stroke-width="0.57" opacity="0.21"/><line x1="294.9" y1="325" x2="271.7" y2="350" stroke="#d8f0ee" stroke-width="0.66" opacity="0.35"/><line x1="271.7" y1="350" x2="197.7" y2="430" stroke="#d8f0ee" stroke-width="0.75" opacity="0.39"/><line x1="447.3" y1="163.6" x2="433.5" y2="180" stroke="#f0f4e8" stroke-width="0.60" opacity="0.28"/><line x1="433.5" y1="180" x2="416.7" y2="200" stroke="#f0f4e8" stroke-width="0.60" opacity="0.28"/><line x1="416.7" y1="200" x2="401.5" y2="218" stroke="#eef3e6" stroke-width="0.70" opacity="0.38"/><line x1="401.5" y1="218" x2="387.2" y2="235" stroke="#eef3e6" stroke-width="0.70" opacity="0.38"/><line x1="387.2" y1="235" x2="374.6" y2="250" stroke="#e3f0e6" stroke-width="0.80" opacity="0.42"/><line x1="374.6" y1="250" x2="362.0" y2="265" stroke="#e3f0e6" stroke-width="0.80" opacity="0.42"/><line x1="362.0" y1="265" x2="349.4" y2="280" stroke="#cdeeea" stroke-width="0.85" opacity="0.43"/><line x1="349.4" y1="280" x2="336.8" y2="295" stroke="#cdeeea" stroke-width="0.85" opacity="0.43"/><line x1="336.8" y1="295" x2="324.2" y2="310" stroke="#c2eef0" stroke-width="0.95" opacity="0.70"/><line x1="324.2" y1="310" x2="311.6" y2="325" stroke="#c2eef0" stroke-width="0.95" opacity="0.70"/><line x1="311.6" y1="325" x2="290.6" y2="350" stroke="#b9ebf1" stroke-width="1.10" opacity="0.84"/><line x1="290.6" y1="350" x2="223.4" y2="430" stroke="#b6eaf2" stroke-width="1.25" opacity="0.92"/><line x1="422.8" y1="200" x2="409.2" y2="218" stroke="#d8f0ee" stroke-width="0.42" opacity="0.11"/><line x1="409.2" y1="218" x2="396.4" y2="235" stroke="#d8f0ee" stroke-width="0.42" opacity="0.12"/><line x1="396.4" y1="235" x2="385.0" y2="250" stroke="#d8f0ee" stroke-width="0.48" opacity="0.13"/><line x1="385.0" y1="250" x2="373.7" y2="265" stroke="#d8f0ee" stroke-width="0.48" opacity="0.13"/><line x1="373.7" y1="265" x2="362.4" y2="280" stroke="#d8f0ee" stroke-width="0.51" opacity="0.13"/><line x1="362.4" y1="280" x2="351.0" y2="295" stroke="#d8f0ee" stroke-width="0.51" opacity="0.13"/><line x1="351.0" y1="295" x2="339.7" y2="310" stroke="#d8f0ee" stroke-width="0.57" opacity="0.21"/><line x1="339.7" y1="310" x2="328.4" y2="325" stroke="#d8f0ee" stroke-width="0.57" opacity="0.21"/><line x1="328.4" y1="325" x2="309.5" y2="350" stroke="#d8f0ee" stroke-width="0.66" opacity="0.35"/><line x1="309.5" y1="350" x2="249.0" y2="430" stroke="#d8f0ee" stroke-width="0.75" opacity="0.39"/><line x1="453.4" y1="163.6" x2="442.4" y2="180" stroke="#f0f4e8" stroke-width="0.60" opacity="0.30"/><line x1="442.4" y1="180" x2="429.0" y2="200" stroke="#f0f4e8" stroke-width="0.60" opacity="0.30"/><line x1="429.0" y1="200" x2="416.9" y2="218" stroke="#eef3e6" stroke-width="0.70" opacity="0.41"/><line x1="416.9" y1="218" x2="405.5" y2="235" stroke="#eef3e6" stroke-width="0.70" opacity="0.41"/><line x1="405.5" y1="235" x2="395.4" y2="250" stroke="#e3f0e6" stroke-width="0.80" opacity="0.44"/><line x1="395.4" y1="250" x2="385.4" y2="265" stroke="#e3f0e6" stroke-width="0.80" opacity="0.44"/><line x1="385.4" y1="265" x2="375.3" y2="280" stroke="#cdeeea" stroke-width="0.85" opacity="0.46"/><line x1="375.3" y1="280" x2="365.2" y2="295" stroke="#cdeeea" stroke-width="0.85" opacity="0.46"/><line x1="365.2" y1="295" x2="355.2" y2="310" stroke="#c2eef0" stroke-width="0.95" opacity="0.70"/><line x1="355.2" y1="310" x2="345.1" y2="325" stroke="#c2eef0" stroke-width="0.95" opacity="0.70"/><line x1="345.1" y1="325" x2="328.3" y2="350" stroke="#b9ebf1" stroke-width="1.10" opacity="0.84"/><line x1="328.3" y1="350" x2="274.7" y2="430" stroke="#b6eaf2" stroke-width="1.25" opacity="0.92"/><line x1="435.1" y1="200" x2="424.6" y2="218" stroke="#d8f0ee" stroke-width="0.42" opacity="0.12"/><line x1="424.6" y1="218" x2="414.6" y2="235" stroke="#d8f0ee" stroke-width="0.42" opacity="0.12"/><line x1="414.6" y1="235" x2="405.8" y2="250" stroke="#d8f0ee" stroke-width="0.48" opacity="0.14"/><line x1="405.8" y1="250" x2="397.0" y2="265" stroke="#d8f0ee" stroke-width="0.48" opacity="0.14"/><line x1="397.0" y1="265" x2="388.2" y2="280" stroke="#d8f0ee" stroke-width="0.51" opacity="0.14"/><line x1="388.2" y1="280" x2="379.4" y2="295" stroke="#d8f0ee" stroke-width="0.51" opacity="0.14"/><line x1="379.4" y1="295" x2="370.6" y2="310" stroke="#d8f0ee" stroke-width="0.57" opacity="0.21"/><line x1="370.6" y1="310" x2="361.9" y2="325" stroke="#d8f0ee" stroke-width="0.57" opacity="0.21"/><line x1="361.9" y1="325" x2="347.2" y2="350" stroke="#d8f0ee" stroke-width="0.66" opacity="0.35"/><line x1="347.2" y1="350" x2="300.3" y2="430" stroke="#d8f0ee" stroke-width="0.75" opacity="0.39"/><line x1="459.5" y1="163.6" x2="451.3" y2="180" stroke="#f0f4e8" stroke-width="0.60" opacity="0.31"/><line x1="451.3" y1="180" x2="441.3" y2="200" stroke="#f0f4e8" stroke-width="0.60" opacity="0.31"/><line x1="441.3" y1="200" x2="432.2" y2="218" stroke="#eef3e6" stroke-width="0.70" opacity="0.43"/><line x1="432.2" y1="218" x2="423.7" y2="235" stroke="#eef3e6" stroke-width="0.70" opacity="0.43"/><line x1="423.7" y1="235" x2="416.2" y2="250" stroke="#e3f0e6" stroke-width="0.80" opacity="0.46"/><line x1="416.2" y1="250" x2="408.7" y2="265" stroke="#e3f0e6" stroke-width="0.80" opacity="0.46"/><line x1="408.7" y1="265" x2="401.2" y2="280" stroke="#cdeeea" stroke-width="0.85" opacity="0.48"/><line x1="401.2" y1="280" x2="393.6" y2="295" stroke="#cdeeea" stroke-width="0.85" opacity="0.48"/><line x1="393.6" y1="295" x2="386.1" y2="310" stroke="#c2eef0" stroke-width="0.95" opacity="0.70"/><line x1="386.1" y1="310" x2="378.6" y2="325" stroke="#c2eef0" stroke-width="0.95" opacity="0.70"/><line x1="378.6" y1="325" x2="366.1" y2="350" stroke="#b9ebf1" stroke-width="1.10" opacity="0.84"/><line x1="366.1" y1="350" x2="326.0" y2="430" stroke="#b6eaf2" stroke-width="1.25" opacity="0.92"/><line x1="447.4" y1="200" x2="439.9" y2="218" stroke="#d8f0ee" stroke-width="0.42" opacity="0.13"/><line x1="439.9" y1="218" x2="432.8" y2="235" stroke="#d8f0ee" stroke-width="0.42" opacity="0.13"/><line x1="432.8" y1="235" x2="426.6" y2="250" stroke="#d8f0ee" stroke-width="0.48" opacity="0.14"/><line x1="426.6" y1="250" x2="420.3" y2="265" stroke="#d8f0ee" stroke-width="0.48" opacity="0.14"/><line x1="420.3" y1="265" x2="414.1" y2="280" stroke="#d8f0ee" stroke-width="0.51" opacity="0.15"/><line x1="414.1" y1="280" x2="407.8" y2="295" stroke="#d8f0ee" stroke-width="0.51" opacity="0.15"/><line x1="407.8" y1="295" x2="401.6" y2="310" stroke="#d8f0ee" stroke-width="0.57" opacity="0.21"/><line x1="401.6" y1="310" x2="395.4" y2="325" stroke="#d8f0ee" stroke-width="0.57" opacity="0.21"/><line x1="395.4" y1="325" x2="384.9" y2="350" stroke="#d8f0ee" stroke-width="0.66" opacity="0.35"/><line x1="384.9" y1="350" x2="351.6" y2="430" stroke="#d8f0ee" stroke-width="0.75" opacity="0.39"/><line x1="465.6" y1="163.6" x2="460.2" y2="180" stroke="#f0f4e8" stroke-width="0.60" opacity="0.33"/><line x1="460.2" y1="180" x2="453.6" y2="200" stroke="#f0f4e8" stroke-width="0.60" opacity="0.33"/><line x1="453.6" y1="200" x2="447.6" y2="218" stroke="#eef3e6" stroke-width="0.70" opacity="0.44"/><line x1="447.6" y1="218" x2="442.0" y2="235" stroke="#eef3e6" stroke-width="0.70" opacity="0.44"/><line x1="442.0" y1="235" x2="437.0" y2="250" stroke="#e3f0e6" stroke-width="0.80" opacity="0.48"/><line x1="437.0" y1="250" x2="432.0" y2="265" stroke="#e3f0e6" stroke-width="0.80" opacity="0.48"/><line x1="432.0" y1="265" x2="427.0" y2="280" stroke="#cdeeea" stroke-width="0.85" opacity="0.50"/><line x1="427.0" y1="280" x2="422.1" y2="295" stroke="#cdeeea" stroke-width="0.85" opacity="0.50"/><line x1="422.1" y1="295" x2="417.1" y2="310" stroke="#c2eef0" stroke-width="0.95" opacity="0.70"/><line x1="417.1" y1="310" x2="412.1" y2="325" stroke="#c2eef0" stroke-width="0.95" opacity="0.70"/><line x1="412.1" y1="325" x2="403.8" y2="350" stroke="#b9ebf1" stroke-width="1.10" opacity="0.84"/><line x1="403.8" y1="350" x2="377.3" y2="430" stroke="#b6eaf2" stroke-width="1.25" opacity="0.92"/><line x1="459.7" y1="200" x2="455.3" y2="218" stroke="#d8f0ee" stroke-width="0.42" opacity="0.14"/><line x1="455.3" y1="218" x2="451.1" y2="235" stroke="#d8f0ee" stroke-width="0.42" opacity="0.14"/><line x1="451.1" y1="235" x2="447.4" y2="250" stroke="#d8f0ee" stroke-width="0.48" opacity="0.15"/><line x1="447.4" y1="250" x2="443.7" y2="265" stroke="#d8f0ee" stroke-width="0.48" opacity="0.15"/><line x1="443.7" y1="265" x2="440.0" y2="280" stroke="#d8f0ee" stroke-width="0.51" opacity="0.15"/><line x1="440.0" y1="280" x2="436.3" y2="295" stroke="#d8f0ee" stroke-width="0.51" opacity="0.15"/><line x1="436.3" y1="295" x2="432.6" y2="310" stroke="#d8f0ee" stroke-width="0.57" opacity="0.21"/><line x1="432.6" y1="310" x2="428.9" y2="325" stroke="#d8f0ee" stroke-width="0.57" opacity="0.21"/><line x1="428.9" y1="325" x2="422.7" y2="350" stroke="#d8f0ee" stroke-width="0.66" opacity="0.35"/><line x1="422.7" y1="350" x2="402.9" y2="430" stroke="#d8f0ee" stroke-width="0.75" opacity="0.39"/><line x1="471.8" y1="163.6" x2="469.1" y2="180" stroke="#f0f4e8" stroke-width="0.60" opacity="0.34"/><line x1="469.1" y1="180" x2="465.9" y2="200" stroke="#f0f4e8" stroke-width="0.60" opacity="0.34"/><line x1="465.9" y1="200" x2="462.9" y2="218" stroke="#eef3e6" stroke-width="0.70" opacity="0.46"/><line x1="462.9" y1="218" x2="460.2" y2="235" stroke="#eef3e6" stroke-width="0.70" opacity="0.46"/><line x1="460.2" y1="235" x2="457.8" y2="250" stroke="#e3f0e6" stroke-width="0.80" opacity="0.50"/><line x1="457.8" y1="250" x2="455.3" y2="265" stroke="#e3f0e6" stroke-width="0.80" opacity="0.50"/><line x1="455.3" y1="265" x2="452.9" y2="280" stroke="#cdeeea" stroke-width="0.85" opacity="0.52"/><line x1="452.9" y1="280" x2="450.5" y2="295" stroke="#cdeeea" stroke-width="0.85" opacity="0.52"/><line x1="450.5" y1="295" x2="448.0" y2="310" stroke="#c2eef0" stroke-width="0.95" opacity="0.70"/><line x1="448.0" y1="310" x2="445.6" y2="325" stroke="#c2eef0" stroke-width="0.95" opacity="0.70"/><line x1="445.6" y1="325" x2="441.6" y2="350" stroke="#b9ebf1" stroke-width="1.10" opacity="0.84"/><line x1="441.6" y1="350" x2="428.6" y2="430" stroke="#b6eaf2" stroke-width="1.25" opacity="0.92"/><line x1="472.0" y1="200" x2="470.6" y2="218" stroke="#d8f0ee" stroke-width="0.42" opacity="0.14"/><line x1="470.6" y1="218" x2="469.3" y2="235" stroke="#d8f0ee" stroke-width="0.42" opacity="0.14"/><line x1="469.3" y1="235" x2="468.1" y2="250" stroke="#d8f0ee" stroke-width="0.48" opacity="0.15"/><line x1="468.1" y1="250" x2="467.0" y2="265" stroke="#d8f0ee" stroke-width="0.48" opacity="0.15"/><line x1="467.0" y1="265" x2="465.8" y2="280" stroke="#d8f0ee" stroke-width="0.51" opacity="0.16"/><line x1="465.8" y1="280" x2="464.7" y2="295" stroke="#d8f0ee" stroke-width="0.51" opacity="0.16"/><line x1="464.7" y1="295" x2="463.5" y2="310" stroke="#d8f0ee" stroke-width="0.57" opacity="0.21"/><line x1="463.5" y1="310" x2="462.4" y2="325" stroke="#d8f0ee" stroke-width="0.57" opacity="0.21"/><line x1="462.4" y1="325" x2="460.4" y2="350" stroke="#d8f0ee" stroke-width="0.66" opacity="0.35"/><line x1="460.4" y1="350" x2="454.3" y2="430" stroke="#d8f0ee" stroke-width="0.75" opacity="0.39"/><line x1="477.9" y1="163.6" x2="478.0" y2="180" stroke="#f0f4e8" stroke-width="0.60" opacity="0.34"/><line x1="478.0" y1="180" x2="478.2" y2="200" stroke="#f0f4e8" stroke-width="0.60" opacity="0.34"/><line x1="478.2" y1="200" x2="478.3" y2="218" stroke="#eef3e6" stroke-width="0.70" opacity="0.46"/><line x1="478.3" y1="218" x2="478.4" y2="235" stroke="#eef3e6" stroke-width="0.70" opacity="0.46"/><line x1="478.4" y1="235" x2="478.5" y2="250" stroke="#e3f0e6" stroke-width="0.80" opacity="0.50"/><line x1="478.5" y1="250" x2="478.6" y2="265" stroke="#e3f0e6" stroke-width="0.80" opacity="0.50"/><line x1="478.6" y1="265" x2="478.8" y2="280" stroke="#cdeeea" stroke-width="0.85" opacity="0.52"/><line x1="478.8" y1="280" x2="478.9" y2="295" stroke="#cdeeea" stroke-width="0.85" opacity="0.52"/><line x1="478.9" y1="295" x2="479.0" y2="310" stroke="#c2eef0" stroke-width="0.95" opacity="0.70"/><line x1="479.0" y1="310" x2="479.1" y2="325" stroke="#c2eef0" stroke-width="0.95" opacity="0.70"/><line x1="479.1" y1="325" x2="479.3" y2="350" stroke="#b9ebf1" stroke-width="1.10" opacity="0.84"/><line x1="479.3" y1="350" x2="479.9" y2="430" stroke="#b6eaf2" stroke-width="1.25" opacity="0.92"/><line x1="484.3" y1="200" x2="486.0" y2="218" stroke="#d8f0ee" stroke-width="0.42" opacity="0.14"/><line x1="486.0" y1="218" x2="487.5" y2="235" stroke="#d8f0ee" stroke-width="0.42" opacity="0.14"/><line x1="487.5" y1="235" x2="488.9" y2="250" stroke="#d8f0ee" stroke-width="0.48" opacity="0.15"/><line x1="488.9" y1="250" x2="490.3" y2="265" stroke="#d8f0ee" stroke-width="0.48" opacity="0.15"/><line x1="490.3" y1="265" x2="491.7" y2="280" stroke="#d8f0ee" stroke-width="0.51" opacity="0.16"/><line x1="491.7" y1="280" x2="493.1" y2="295" stroke="#d8f0ee" stroke-width="0.51" opacity="0.16"/><line x1="493.1" y1="295" x2="494.5" y2="310" stroke="#d8f0ee" stroke-width="0.57" opacity="0.21"/><line x1="494.5" y1="310" x2="495.9" y2="325" stroke="#d8f0ee" stroke-width="0.57" opacity="0.21"/><line x1="495.9" y1="325" x2="498.2" y2="350" stroke="#d8f0ee" stroke-width="0.66" opacity="0.35"/><line x1="498.2" y1="350" x2="505.6" y2="430" stroke="#d8f0ee" stroke-width="0.75" opacity="0.39"/><line x1="484.0" y1="163.6" x2="486.9" y2="180" stroke="#f0f4e8" stroke-width="0.60" opacity="0.34"/><line x1="486.9" y1="180" x2="490.5" y2="200" stroke="#f0f4e8" stroke-width="0.60" opacity="0.34"/><line x1="490.5" y1="200" x2="493.6" y2="218" stroke="#eef3e6" stroke-width="0.70" opacity="0.46"/><line x1="493.6" y1="218" x2="496.7" y2="235" stroke="#eef3e6" stroke-width="0.70" opacity="0.46"/><line x1="496.7" y1="235" x2="499.3" y2="250" stroke="#e3f0e6" stroke-width="0.80" opacity="0.49"/><line x1="499.3" y1="250" x2="502.0" y2="265" stroke="#e3f0e6" stroke-width="0.80" opacity="0.49"/><line x1="502.0" y1="265" x2="504.6" y2="280" stroke="#cdeeea" stroke-width="0.85" opacity="0.51"/><line x1="504.6" y1="280" x2="507.3" y2="295" stroke="#cdeeea" stroke-width="0.85" opacity="0.51"/><line x1="507.3" y1="295" x2="509.9" y2="310" stroke="#c2eef0" stroke-width="0.95" opacity="0.70"/><line x1="509.9" y1="310" x2="512.6" y2="325" stroke="#c2eef0" stroke-width="0.95" opacity="0.70"/><line x1="512.6" y1="325" x2="517.0" y2="350" stroke="#b9ebf1" stroke-width="1.10" opacity="0.84"/><line x1="517.0" y1="350" x2="531.2" y2="430" stroke="#b6eaf2" stroke-width="1.25" opacity="0.92"/><line x1="496.6" y1="200" x2="501.3" y2="218" stroke="#d8f0ee" stroke-width="0.42" opacity="0.13"/><line x1="501.3" y1="218" x2="505.8" y2="235" stroke="#d8f0ee" stroke-width="0.42" opacity="0.13"/><line x1="505.8" y1="235" x2="509.7" y2="250" stroke="#d8f0ee" stroke-width="0.48" opacity="0.15"/><line x1="509.7" y1="250" x2="513.6" y2="265" stroke="#d8f0ee" stroke-width="0.48" opacity="0.15"/><line x1="513.6" y1="265" x2="517.6" y2="280" stroke="#d8f0ee" stroke-width="0.51" opacity="0.15"/><line x1="517.6" y1="280" x2="521.5" y2="295" stroke="#d8f0ee" stroke-width="0.51" opacity="0.15"/><line x1="521.5" y1="295" x2="525.4" y2="310" stroke="#d8f0ee" stroke-width="0.57" opacity="0.21"/><line x1="525.4" y1="310" x2="529.4" y2="325" stroke="#d8f0ee" stroke-width="0.57" opacity="0.21"/><line x1="529.4" y1="325" x2="535.9" y2="350" stroke="#d8f0ee" stroke-width="0.66" opacity="0.35"/><line x1="535.9" y1="350" x2="556.9" y2="430" stroke="#d8f0ee" stroke-width="0.75" opacity="0.39"/><line x1="490.1" y1="163.6" x2="495.8" y2="180" stroke="#f0f4e8" stroke-width="0.60" opacity="0.33"/><line x1="495.8" y1="180" x2="502.7" y2="200" stroke="#f0f4e8" stroke-width="0.60" opacity="0.33"/><line x1="502.7" y1="200" x2="509.0" y2="218" stroke="#eef3e6" stroke-width="0.70" opacity="0.44"/><line x1="509.0" y1="218" x2="514.9" y2="235" stroke="#eef3e6" stroke-width="0.70" opacity="0.44"/><line x1="514.9" y1="235" x2="520.1" y2="250" stroke="#e3f0e6" stroke-width="0.80" opacity="0.48"/><line x1="520.1" y1="250" x2="525.3" y2="265" stroke="#e3f0e6" stroke-width="0.80" opacity="0.48"/><line x1="525.3" y1="265" x2="530.5" y2="280" stroke="#cdeeea" stroke-width="0.85" opacity="0.50"/><line x1="530.5" y1="280" x2="535.7" y2="295" stroke="#cdeeea" stroke-width="0.85" opacity="0.50"/><line x1="535.7" y1="295" x2="540.9" y2="310" stroke="#c2eef0" stroke-width="0.95" opacity="0.70"/><line x1="540.9" y1="310" x2="546.1" y2="325" stroke="#c2eef0" stroke-width="0.95" opacity="0.70"/><line x1="546.1" y1="325" x2="554.8" y2="350" stroke="#b9ebf1" stroke-width="1.10" opacity="0.84"/><line x1="554.8" y1="350" x2="582.5" y2="430" stroke="#b6eaf2" stroke-width="1.25" opacity="0.92"/><line x1="508.9" y1="200" x2="516.7" y2="218" stroke="#d8f0ee" stroke-width="0.42" opacity="0.13"/><line x1="516.7" y1="218" x2="524.0" y2="235" stroke="#d8f0ee" stroke-width="0.42" opacity="0.13"/><line x1="524.0" y1="235" x2="530.5" y2="250" stroke="#d8f0ee" stroke-width="0.48" opacity="0.14"/><line x1="530.5" y1="250" x2="537.0" y2="265" stroke="#d8f0ee" stroke-width="0.48" opacity="0.14"/><line x1="537.0" y1="265" x2="543.4" y2="280" stroke="#d8f0ee" stroke-width="0.51" opacity="0.15"/><line x1="543.4" y1="280" x2="549.9" y2="295" stroke="#d8f0ee" stroke-width="0.51" opacity="0.15"/><line x1="549.9" y1="295" x2="556.4" y2="310" stroke="#d8f0ee" stroke-width="0.57" opacity="0.21"/><line x1="556.4" y1="310" x2="562.9" y2="325" stroke="#d8f0ee" stroke-width="0.57" opacity="0.21"/><line x1="562.9" y1="325" x2="573.7" y2="350" stroke="#d8f0ee" stroke-width="0.66" opacity="0.35"/><line x1="573.7" y1="350" x2="608.2" y2="430" stroke="#d8f0ee" stroke-width="0.75" opacity="0.39"/><line x1="496.2" y1="163.6" x2="504.7" y2="180" stroke="#f0f4e8" stroke-width="0.60" opacity="0.31"/><line x1="504.7" y1="180" x2="515.0" y2="200" stroke="#f0f4e8" stroke-width="0.60" opacity="0.31"/><line x1="515.0" y1="200" x2="524.3" y2="218" stroke="#eef3e6" stroke-width="0.70" opacity="0.42"/><line x1="524.3" y1="218" x2="533.1" y2="235" stroke="#eef3e6" stroke-width="0.70" opacity="0.42"/><line x1="533.1" y1="235" x2="540.9" y2="250" stroke="#e3f0e6" stroke-width="0.80" opacity="0.46"/><line x1="540.9" y1="250" x2="548.6" y2="265" stroke="#e3f0e6" stroke-width="0.80" opacity="0.46"/><line x1="548.6" y1="265" x2="556.4" y2="280" stroke="#cdeeea" stroke-width="0.85" opacity="0.48"/><line x1="556.4" y1="280" x2="564.1" y2="295" stroke="#cdeeea" stroke-width="0.85" opacity="0.48"/><line x1="564.1" y1="295" x2="571.9" y2="310" stroke="#c2eef0" stroke-width="0.95" opacity="0.70"/><line x1="571.9" y1="310" x2="579.6" y2="325" stroke="#c2eef0" stroke-width="0.95" opacity="0.70"/><line x1="579.6" y1="325" x2="592.5" y2="350" stroke="#b9ebf1" stroke-width="1.10" opacity="0.84"/><line x1="592.5" y1="350" x2="633.8" y2="430" stroke="#b6eaf2" stroke-width="1.25" opacity="0.92"/><line x1="521.2" y1="200" x2="532.0" y2="218" stroke="#d8f0ee" stroke-width="0.42" opacity="0.12"/><line x1="532.0" y1="218" x2="542.2" y2="235" stroke="#d8f0ee" stroke-width="0.42" opacity="0.12"/><line x1="542.2" y1="235" x2="551.3" y2="250" stroke="#d8f0ee" stroke-width="0.48" opacity="0.13"/><line x1="551.3" y1="250" x2="560.3" y2="265" stroke="#d8f0ee" stroke-width="0.48" opacity="0.13"/><line x1="560.3" y1="265" x2="569.3" y2="280" stroke="#d8f0ee" stroke-width="0.51" opacity="0.14"/><line x1="569.3" y1="280" x2="578.3" y2="295" stroke="#d8f0ee" stroke-width="0.51" opacity="0.14"/><line x1="578.3" y1="295" x2="587.3" y2="310" stroke="#d8f0ee" stroke-width="0.57" opacity="0.21"/><line x1="587.3" y1="310" x2="596.4" y2="325" stroke="#d8f0ee" stroke-width="0.57" opacity="0.21"/><line x1="596.4" y1="325" x2="611.4" y2="350" stroke="#d8f0ee" stroke-width="0.66" opacity="0.35"/><line x1="611.4" y1="350" x2="659.5" y2="430" stroke="#d8f0ee" stroke-width="0.75" opacity="0.39"/><line x1="502.4" y1="163.6" x2="513.6" y2="180" stroke="#f0f4e8" stroke-width="0.60" opacity="0.30"/><line x1="513.6" y1="180" x2="527.3" y2="200" stroke="#f0f4e8" stroke-width="0.60" opacity="0.30"/><line x1="527.3" y1="200" x2="539.7" y2="218" stroke="#eef3e6" stroke-width="0.70" opacity="0.40"/><line x1="539.7" y1="218" x2="551.4" y2="235" stroke="#eef3e6" stroke-width="0.70" opacity="0.40"/><line x1="551.4" y1="235" x2="561.7" y2="250" stroke="#e3f0e6" stroke-width="0.80" opacity="0.44"/><line x1="561.7" y1="250" x2="571.9" y2="265" stroke="#e3f0e6" stroke-width="0.80" opacity="0.44"/><line x1="571.9" y1="265" x2="582.2" y2="280" stroke="#cdeeea" stroke-width="0.85" opacity="0.46"/><line x1="582.2" y1="280" x2="592.5" y2="295" stroke="#cdeeea" stroke-width="0.85" opacity="0.46"/><line x1="592.5" y1="295" x2="602.8" y2="310" stroke="#c2eef0" stroke-width="0.95" opacity="0.70"/><line x1="602.8" y1="310" x2="613.1" y2="325" stroke="#c2eef0" stroke-width="0.95" opacity="0.70"/><line x1="613.1" y1="325" x2="630.3" y2="350" stroke="#b9ebf1" stroke-width="1.10" opacity="0.84"/><line x1="630.3" y1="350" x2="685.2" y2="430" stroke="#b6eaf2" stroke-width="1.25" opacity="0.92"/><line x1="533.5" y1="200" x2="547.4" y2="218" stroke="#d8f0ee" stroke-width="0.42" opacity="0.11"/><line x1="547.4" y1="218" x2="560.5" y2="235" stroke="#d8f0ee" stroke-width="0.42" opacity="0.12"/><line x1="560.5" y1="235" x2="572.0" y2="250" stroke="#d8f0ee" stroke-width="0.48" opacity="0.13"/><line x1="572.0" y1="250" x2="583.6" y2="265" stroke="#d8f0ee" stroke-width="0.48" opacity="0.13"/><line x1="583.6" y1="265" x2="595.2" y2="280" stroke="#d8f0ee" stroke-width="0.51" opacity="0.13"/><line x1="595.2" y1="280" x2="606.7" y2="295" stroke="#d8f0ee" stroke-width="0.51" opacity="0.13"/><line x1="606.7" y1="295" x2="618.3" y2="310" stroke="#d8f0ee" stroke-width="0.57" opacity="0.21"/><line x1="618.3" y1="310" x2="629.9" y2="325" stroke="#d8f0ee" stroke-width="0.57" opacity="0.21"/><line x1="629.9" y1="325" x2="649.1" y2="350" stroke="#d8f0ee" stroke-width="0.66" opacity="0.35"/><line x1="649.1" y1="350" x2="710.8" y2="430" stroke="#d8f0ee" stroke-width="0.75" opacity="0.39"/><line x1="508.5" y1="163.6" x2="522.5" y2="180" stroke="#f0f4e8" stroke-width="0.60" opacity="0.28"/><line x1="522.5" y1="180" x2="539.6" y2="200" stroke="#f0f4e8" stroke-width="0.60" opacity="0.28"/><line x1="539.6" y1="200" x2="555.0" y2="218" stroke="#eef3e6" stroke-width="0.70" opacity="0.38"/><line x1="555.0" y1="218" x2="569.6" y2="235" stroke="#eef3e6" stroke-width="0.70" opacity="0.38"/><line x1="569.6" y1="235" x2="582.4" y2="250" stroke="#e3f0e6" stroke-width="0.80" opacity="0.42"/><line x1="582.4" y1="250" x2="595.3" y2="265" stroke="#e3f0e6" stroke-width="0.80" opacity="0.42"/><line x1="595.3" y1="265" x2="608.1" y2="280" stroke="#cdeeea" stroke-width="0.85" opacity="0.43"/><line x1="608.1" y1="280" x2="620.9" y2="295" stroke="#cdeeea" stroke-width="0.85" opacity="0.43"/><line x1="620.9" y1="295" x2="633.8" y2="310" stroke="#c2eef0" stroke-width="0.95" opacity="0.70"/><line x1="633.8" y1="310" x2="646.6" y2="325" stroke="#c2eef0" stroke-width="0.95" opacity="0.70"/><line x1="646.6" y1="325" x2="668.0" y2="350" stroke="#b9ebf1" stroke-width="1.10" opacity="0.84"/><line x1="668.0" y1="350" x2="736.5" y2="430" stroke="#b6eaf2" stroke-width="1.25" opacity="0.92"/><line x1="545.8" y1="200" x2="562.7" y2="218" stroke="#d8f0ee" stroke-width="0.42" opacity="0.10"/><line x1="562.7" y1="218" x2="578.7" y2="235" stroke="#d8f0ee" stroke-width="0.42" opacity="0.11"/><line x1="578.7" y1="235" x2="592.8" y2="250" stroke="#d8f0ee" stroke-width="0.48" opacity="0.12"/><line x1="592.8" y1="250" x2="606.9" y2="265" stroke="#d8f0ee" stroke-width="0.48" opacity="0.12"/><line x1="606.9" y1="265" x2="621.0" y2="280" stroke="#d8f0ee" stroke-width="0.51" opacity="0.13"/><line x1="621.0" y1="280" x2="635.1" y2="295" stroke="#d8f0ee" stroke-width="0.51" opacity="0.13"/><line x1="635.1" y1="295" x2="649.3" y2="310" stroke="#d8f0ee" stroke-width="0.57" opacity="0.21"/><line x1="649.3" y1="310" x2="663.4" y2="325" stroke="#d8f0ee" stroke-width="0.57" opacity="0.21"/><line x1="663.4" y1="325" x2="686.9" y2="350" stroke="#d8f0ee" stroke-width="0.66" opacity="0.35"/><line x1="686.9" y1="350" x2="762.1" y2="430" stroke="#d8f0ee" stroke-width="0.75" opacity="0.39"/><line x1="514.6" y1="163.6" x2="531.4" y2="180" stroke="#f0f4e8" stroke-width="0.60" opacity="0.24"/><line x1="531.4" y1="180" x2="551.9" y2="200" stroke="#f0f4e8" stroke-width="0.60" opacity="0.27"/><line x1="551.9" y1="200" x2="570.4" y2="218" stroke="#eef3e6" stroke-width="0.70" opacity="0.36"/><line x1="570.4" y1="218" x2="587.8" y2="235" stroke="#eef3e6" stroke-width="0.70" opacity="0.36"/><line x1="587.8" y1="235" x2="603.2" y2="250" stroke="#e3f0e6" stroke-width="0.80" opacity="0.39"/><line x1="603.2" y1="250" x2="618.6" y2="265" stroke="#e3f0e6" stroke-width="0.80" opacity="0.39"/><line x1="618.6" y1="265" x2="634.0" y2="280" stroke="#cdeeea" stroke-width="0.85" opacity="0.41"/><line x1="634.0" y1="280" x2="649.3" y2="295" stroke="#cdeeea" stroke-width="0.85" opacity="0.41"/><line x1="649.3" y1="295" x2="664.7" y2="310" stroke="#c2eef0" stroke-width="0.95" opacity="0.70"/><line x1="664.7" y1="310" x2="680.1" y2="325" stroke="#c2eef0" stroke-width="0.95" opacity="0.70"/><line x1="680.1" y1="325" x2="705.7" y2="350" stroke="#b9ebf1" stroke-width="1.10" opacity="0.84"/><line x1="705.7" y1="350" x2="787.8" y2="430" stroke="#b6eaf2" stroke-width="1.25" opacity="0.92"/><line x1="558.1" y1="200" x2="578.1" y2="218" stroke="#d8f0ee" stroke-width="0.42" opacity="0.08"/><line x1="578.1" y1="218" x2="596.9" y2="235" stroke="#d8f0ee" stroke-width="0.42" opacity="0.10"/><line x1="596.9" y1="235" x2="613.6" y2="250" stroke="#d8f0ee" stroke-width="0.48" opacity="0.12"/><line x1="613.6" y1="250" x2="630.2" y2="265" stroke="#d8f0ee" stroke-width="0.48" opacity="0.12"/><line x1="630.2" y1="265" x2="646.9" y2="280" stroke="#d8f0ee" stroke-width="0.51" opacity="0.12"/><line x1="646.9" y1="280" x2="663.6" y2="295" stroke="#d8f0ee" stroke-width="0.51" opacity="0.12"/><line x1="663.6" y1="295" x2="680.2" y2="310" stroke="#d8f0ee" stroke-width="0.57" opacity="0.21"/><line x1="680.2" y1="310" x2="696.9" y2="325" stroke="#d8f0ee" stroke-width="0.57" opacity="0.21"/><line x1="696.9" y1="325" x2="724.6" y2="350" stroke="#d8f0ee" stroke-width="0.66" opacity="0.35"/><line x1="724.6" y1="350" x2="813.4" y2="430" stroke="#d8f0ee" stroke-width="0.75" opacity="0.39"/><line x1="520.7" y1="163.6" x2="540.3" y2="180" stroke="#f0f4e8" stroke-width="0.60" opacity="0.21"/><line x1="540.3" y1="180" x2="564.2" y2="200" stroke="#f0f4e8" stroke-width="0.60" opacity="0.25"/><line x1="564.2" y1="200" x2="585.7" y2="218" stroke="#eef3e6" stroke-width="0.70" opacity="0.34"/><line x1="585.7" y1="218" x2="606.1" y2="235" stroke="#eef3e6" stroke-width="0.70" opacity="0.34"/><line x1="606.1" y1="235" x2="624.0" y2="250" stroke="#e3f0e6" stroke-width="0.80" opacity="0.37"/><line x1="624.0" y1="250" x2="641.9" y2="265" stroke="#e3f0e6" stroke-width="0.80" opacity="0.37"/><line x1="641.9" y1="265" x2="659.8" y2="280" stroke="#cdeeea" stroke-width="0.85" opacity="0.39"/><line x1="659.8" y1="280" x2="677.8" y2="295" stroke="#cdeeea" stroke-width="0.85" opacity="0.39"/><line x1="677.8" y1="295" x2="695.7" y2="310" stroke="#c2eef0" stroke-width="0.95" opacity="0.70"/><line x1="695.7" y1="310" x2="713.6" y2="325" stroke="#c2eef0" stroke-width="0.95" opacity="0.70"/><line x1="713.6" y1="325" x2="743.5" y2="350" stroke="#b9ebf1" stroke-width="1.10" opacity="0.84"/><line x1="570.4" y1="200" x2="593.4" y2="218" stroke="#d8f0ee" stroke-width="0.42" opacity="0.07"/><line x1="593.4" y1="218" x2="615.2" y2="235" stroke="#d8f0ee" stroke-width="0.42" opacity="0.09"/><line x1="615.2" y1="235" x2="634.4" y2="250" stroke="#d8f0ee" stroke-width="0.48" opacity="0.11"/><line x1="634.4" y1="250" x2="653.6" y2="265" stroke="#d8f0ee" stroke-width="0.48" opacity="0.11"/><line x1="653.6" y1="265" x2="672.8" y2="280" stroke="#d8f0ee" stroke-width="0.51" opacity="0.11"/><line x1="672.8" y1="280" x2="692.0" y2="295" stroke="#d8f0ee" stroke-width="0.51" opacity="0.11"/><line x1="692.0" y1="295" x2="711.2" y2="310" stroke="#d8f0ee" stroke-width="0.57" opacity="0.21"/><line x1="711.2" y1="310" x2="730.4" y2="325" stroke="#d8f0ee" stroke-width="0.57" opacity="0.21"/><line x1="730.4" y1="325" x2="762.4" y2="350" stroke="#d8f0ee" stroke-width="0.66" opacity="0.35"/><line x1="526.9" y1="163.6" x2="549.2" y2="180" stroke="#f0f4e8" stroke-width="0.60" opacity="0.17"/><line x1="549.2" y1="180" x2="576.5" y2="200" stroke="#f0f4e8" stroke-width="0.60" opacity="0.24"/><line x1="576.5" y1="200" x2="601.1" y2="218" stroke="#eef3e6" stroke-width="0.70" opacity="0.33"/><line x1="601.1" y1="218" x2="624.3" y2="235" stroke="#eef3e6" stroke-width="0.70" opacity="0.33"/><line x1="624.3" y1="235" x2="644.8" y2="250" stroke="#e3f0e6" stroke-width="0.80" opacity="0.36"/><line x1="644.8" y1="250" x2="665.2" y2="265" stroke="#e3f0e6" stroke-width="0.80" opacity="0.36"/><line x1="665.2" y1="265" x2="685.7" y2="280" stroke="#cdeeea" stroke-width="0.85" opacity="0.37"/><line x1="685.7" y1="280" x2="706.2" y2="295" stroke="#cdeeea" stroke-width="0.85" opacity="0.37"/><line x1="706.2" y1="295" x2="726.6" y2="310" stroke="#c2eef0" stroke-width="0.95" opacity="0.70"/><line x1="726.6" y1="310" x2="747.1" y2="325" stroke="#c2eef0" stroke-width="0.95" opacity="0.70"/><line x1="582.7" y1="200" x2="608.8" y2="218" stroke="#d8f0ee" stroke-width="0.42" opacity="0.06"/><line x1="608.8" y1="218" x2="633.4" y2="235" stroke="#d8f0ee" stroke-width="0.42" opacity="0.08"/><line x1="633.4" y1="235" x2="655.2" y2="250" stroke="#d8f0ee" stroke-width="0.48" opacity="0.10"/><line x1="655.2" y1="250" x2="676.9" y2="265" stroke="#d8f0ee" stroke-width="0.48" opacity="0.10"/><line x1="676.9" y1="265" x2="698.6" y2="280" stroke="#d8f0ee" stroke-width="0.51" opacity="0.11"/><line x1="698.6" y1="280" x2="720.4" y2="295" stroke="#d8f0ee" stroke-width="0.51" opacity="0.11"/><line x1="720.4" y1="295" x2="742.1" y2="310" stroke="#d8f0ee" stroke-width="0.57" opacity="0.21"/><line x1="742.1" y1="310" x2="763.9" y2="325" stroke="#d8f0ee" stroke-width="0.57" opacity="0.21"/><line x1="533.0" y1="163.6" x2="558.1" y2="180" stroke="#f0f4e8" stroke-width="0.60" opacity="0.15"/><line x1="558.1" y1="180" x2="588.8" y2="200" stroke="#f0f4e8" stroke-width="0.60" opacity="0.23"/><line x1="588.8" y1="200" x2="616.4" y2="218" stroke="#eef3e6" stroke-width="0.70" opacity="0.31"/><line x1="616.4" y1="218" x2="642.5" y2="235" stroke="#eef3e6" stroke-width="0.70" opacity="0.31"/><line x1="642.5" y1="235" x2="665.5" y2="250" stroke="#e3f0e6" stroke-width="0.80" opacity="0.34"/><line x1="665.5" y1="250" x2="688.6" y2="265" stroke="#e3f0e6" stroke-width="0.80" opacity="0.34"/><line x1="688.6" y1="265" x2="711.6" y2="280" stroke="#cdeeea" stroke-width="0.85" opacity="0.35"/><line x1="711.6" y1="280" x2="734.6" y2="295" stroke="#cdeeea" stroke-width="0.85" opacity="0.35"/><line x1="734.6" y1="295" x2="757.6" y2="310" stroke="#c2eef0" stroke-width="0.95" opacity="0.70"/><line x1="595.0" y1="200" x2="624.1" y2="218" stroke="#d8f0ee" stroke-width="0.42" opacity="0.05"/><line x1="624.1" y1="218" x2="651.6" y2="235" stroke="#d8f0ee" stroke-width="0.42" opacity="0.07"/><line x1="651.6" y1="235" x2="675.9" y2="250" stroke="#d8f0ee" stroke-width="0.48" opacity="0.09"/><line x1="675.9" y1="250" x2="700.2" y2="265" stroke="#d8f0ee" stroke-width="0.48" opacity="0.10"/><line x1="700.2" y1="265" x2="724.5" y2="280" stroke="#d8f0ee" stroke-width="0.51" opacity="0.10"/><line x1="724.5" y1="280" x2="748.8" y2="295" stroke="#d8f0ee" stroke-width="0.51" opacity="0.10"/><line x1="539.1" y1="163.6" x2="567.1" y2="180" stroke="#f0f4e8" stroke-width="0.60" opacity="0.13"/><line x1="567.1" y1="180" x2="601.1" y2="200" stroke="#f0f4e8" stroke-width="0.60" opacity="0.21"/><line x1="601.1" y1="200" x2="631.8" y2="218" stroke="#eef3e6" stroke-width="0.70" opacity="0.30"/><line x1="631.8" y1="218" x2="660.8" y2="235" stroke="#eef3e6" stroke-width="0.70" opacity="0.30"/><line x1="660.8" y1="235" x2="686.3" y2="250" stroke="#e3f0e6" stroke-width="0.80" opacity="0.33"/><line x1="686.3" y1="250" x2="711.9" y2="265" stroke="#e3f0e6" stroke-width="0.80" opacity="0.33"/><line x1="711.9" y1="265" x2="737.4" y2="280" stroke="#cdeeea" stroke-width="0.85" opacity="0.34"/><line x1="737.4" y1="280" x2="763.0" y2="295" stroke="#cdeeea" stroke-width="0.85" opacity="0.34"/><line x1="607.3" y1="200" x2="639.5" y2="218" stroke="#d8f0ee" stroke-width="0.42" opacity="0.04"/><line x1="639.5" y1="218" x2="669.9" y2="235" stroke="#d8f0ee" stroke-width="0.42" opacity="0.06"/><line x1="669.9" y1="235" x2="696.7" y2="250" stroke="#d8f0ee" stroke-width="0.48" opacity="0.08"/><line x1="696.7" y1="250" x2="723.5" y2="265" stroke="#d8f0ee" stroke-width="0.48" opacity="0.09"/><line x1="723.5" y1="265" x2="750.4" y2="280" stroke="#d8f0ee" stroke-width="0.51" opacity="0.10"/><line x1="545.2" y1="163.6" x2="576.0" y2="180" stroke="#f0f4e8" stroke-width="0.60" opacity="0.11"/><line x1="576.0" y1="180" x2="613.4" y2="200" stroke="#f0f4e8" stroke-width="0.60" opacity="0.18"/><line x1="613.4" y1="200" x2="647.2" y2="218" stroke="#eef3e6" stroke-width="0.70" opacity="0.29"/><line x1="647.2" y1="218" x2="679.0" y2="235" stroke="#eef3e6" stroke-width="0.70" opacity="0.29"/><line x1="679.0" y1="235" x2="707.1" y2="250" stroke="#e3f0e6" stroke-width="0.80" opacity="0.31"/><line x1="707.1" y1="250" x2="735.2" y2="265" stroke="#e3f0e6" stroke-width="0.80" opacity="0.31"/><line x1="735.2" y1="265" x2="763.3" y2="280" stroke="#cdeeea" stroke-width="0.85" opacity="0.33"/><line x1="654.8" y1="218" x2="688.1" y2="235" stroke="#d8f0ee" stroke-width="0.42" opacity="0.05"/><line x1="688.1" y1="235" x2="717.5" y2="250" stroke="#d8f0ee" stroke-width="0.48" opacity="0.07"/><line x1="717.5" y1="250" x2="746.9" y2="265" stroke="#d8f0ee" stroke-width="0.48" opacity="0.08"/><line x1="551.4" y1="163.6" x2="584.9" y2="180" stroke="#f0f4e8" stroke-width="0.60" opacity="0.10"/><line x1="584.9" y1="180" x2="625.7" y2="200" stroke="#f0f4e8" stroke-width="0.60" opacity="0.16"/><line x1="625.7" y1="200" x2="662.5" y2="218" stroke="#eef3e6" stroke-width="0.70" opacity="0.28"/><line x1="662.5" y1="218" x2="697.2" y2="235" stroke="#eef3e6" stroke-width="0.70" opacity="0.28"/><line x1="697.2" y1="235" x2="727.9" y2="250" stroke="#e3f0e6" stroke-width="0.80" opacity="0.30"/><line x1="727.9" y1="250" x2="758.5" y2="265" stroke="#e3f0e6" stroke-width="0.80" opacity="0.30"/><line x1="670.2" y1="218" x2="706.4" y2="235" stroke="#d8f0ee" stroke-width="0.42" opacity="0.04"/><line x1="706.4" y1="235" x2="738.3" y2="250" stroke="#d8f0ee" stroke-width="0.48" opacity="0.06"/><line x1="738.3" y1="250" x2="770.2" y2="265" stroke="#d8f0ee" stroke-width="0.48" opacity="0.07"/><line x1="557.5" y1="163.6" x2="593.8" y2="180" stroke="#f0f4e8" stroke-width="0.60" opacity="0.08"/><line x1="593.8" y1="180" x2="638.0" y2="200" stroke="#f0f4e8" stroke-width="0.60" opacity="0.14"/><line x1="638.0" y1="200" x2="677.9" y2="218" stroke="#eef3e6" stroke-width="0.70" opacity="0.27"/><line x1="677.9" y1="218" x2="715.5" y2="235" stroke="#eef3e6" stroke-width="0.70" opacity="0.27"/><line x1="715.5" y1="235" x2="748.7" y2="250" stroke="#e3f0e6" stroke-width="0.80" opacity="0.29"/><line x1="724.6" y1="235" x2="759.0" y2="250" stroke="#d8f0ee" stroke-width="0.48" opacity="0.05"/><line x1="563.6" y1="163.6" x2="602.7" y2="180" stroke="#f0f4e8" stroke-width="0.60" opacity="0.07"/><line x1="602.7" y1="180" x2="650.3" y2="200" stroke="#f0f4e8" stroke-width="0.60" opacity="0.13"/><line x1="650.3" y1="200" x2="693.2" y2="218" stroke="#eef3e6" stroke-width="0.70" opacity="0.24"/><line x1="693.2" y1="218" x2="733.7" y2="235" stroke="#eef3e6" stroke-width="0.70" opacity="0.26"/><line x1="733.7" y1="235" x2="769.4" y2="250" stroke="#e3f0e6" stroke-width="0.80" opacity="0.29"/><line x1="742.8" y1="235" x2="779.8" y2="250" stroke="#d8f0ee" stroke-width="0.48" opacity="0.05"/><line x1="569.7" y1="163.6" x2="611.6" y2="180" stroke="#f0f4e8" stroke-width="0.60" opacity="0.06"/><line x1="611.6" y1="180" x2="662.6" y2="200" stroke="#f0f4e8" stroke-width="0.60" opacity="0.11"/><line x1="662.6" y1="200" x2="708.6" y2="218" stroke="#eef3e6" stroke-width="0.70" opacity="0.22"/><line x1="708.6" y1="218" x2="751.9" y2="235" stroke="#eef3e6" stroke-width="0.70" opacity="0.26"/><line x1="575.8" y1="163.6" x2="620.5" y2="180" stroke="#f0f4e8" stroke-width="0.60" opacity="0.06"/><line x1="620.5" y1="180" x2="674.9" y2="200" stroke="#f0f4e8" stroke-width="0.60" opacity="0.10"/><line x1="674.9" y1="200" x2="723.9" y2="218" stroke="#eef3e6" stroke-width="0.70" opacity="0.20"/><line x1="723.9" y1="218" x2="770.2" y2="235" stroke="#eef3e6" stroke-width="0.70" opacity="0.25"/><line x1="582.0" y1="163.6" x2="629.4" y2="180" stroke="#f0f4e8" stroke-width="0.60" opacity="0.05"/><line x1="629.4" y1="180" x2="687.2" y2="200" stroke="#f0f4e8" stroke-width="0.60" opacity="0.09"/><line x1="687.2" y1="200" x2="739.3" y2="218" stroke="#eef3e6" stroke-width="0.70" opacity="0.18"/><line x1="739.3" y1="218" x2="788.4" y2="235" stroke="#eef3e6" stroke-width="0.70" opacity="0.23"/><line x1="588.1" y1="163.6" x2="638.3" y2="180" stroke="#f0f4e8" stroke-width="0.60" opacity="0.04"/><line x1="638.3" y1="180" x2="699.5" y2="200" stroke="#f0f4e8" stroke-width="0.60" opacity="0.08"/><line x1="699.5" y1="200" x2="754.6" y2="218" stroke="#eef3e6" stroke-width="0.70" opacity="0.16"/><line x1="647.2" y1="180" x2="711.8" y2="200" stroke="#f0f4e8" stroke-width="0.60" opacity="0.07"/><line x1="711.8" y1="200" x2="770.0" y2="218" stroke="#eef3e6" stroke-width="0.70" opacity="0.15"/><line x1="656.1" y1="180" x2="724.1" y2="200" stroke="#f0f4e8" stroke-width="0.60" opacity="0.07"/><line x1="724.1" y1="200" x2="785.3" y2="218" stroke="#eef3e6" stroke-width="0.70" opacity="0.14"/><line x1="665.0" y1="180" x2="736.4" y2="200" stroke="#f0f4e8" stroke-width="0.60" opacity="0.06"/><line x1="736.4" y1="200" x2="800.7" y2="218" stroke="#eef3e6" stroke-width="0.70" opacity="0.13"/><line x1="673.9" y1="180" x2="748.7" y2="200" stroke="#f0f4e8" stroke-width="0.60" opacity="0.06"/><line x1="682.8" y1="180" x2="761.0" y2="200" stroke="#f0f4e8" stroke-width="0.60" opacity="0.05"/><line x1="691.7" y1="180" x2="773.3" y2="200" stroke="#f0f4e8" stroke-width="0.60" opacity="0.05"/><line x1="700.6" y1="180" x2="785.6" y2="200" stroke="#f0f4e8" stroke-width="0.60" opacity="0.04"/><line x1="214" x2="741" y1="426.14" y2="426.14" stroke="#d8f0ee" stroke-width="0.75" opacity="0.37"/><line x1="214" x2="741" y1="411.59" y2="411.59" stroke="#93cde6" stroke-width="0.85" opacity="0.81"/><line x1="214" x2="741" y1="398.39" y2="398.39" stroke="#d8f0ee" stroke-width="0.75" opacity="0.37"/><line x1="214" x2="741" y1="386.37" y2="386.37" stroke="#93cde6" stroke-width="0.85" opacity="0.81"/><line x1="214" x2="741" y1="375.36" y2="375.36" stroke="#d8f0ee" stroke-width="0.75" opacity="0.37"/><line x1="214" x2="741" y1="365.26" y2="365.26" stroke="#93cde6" stroke-width="0.85" opacity="0.81"/><line x1="214" x2="741" y1="355.94" y2="355.94" stroke="#d8f0ee" stroke-width="0.75" opacity="0.37"/><line x1="214" x2="741" y1="339.34" y2="339.34" stroke="#d8f0ee" stroke-width="0.66" opacity="0.34"/><line x1="214" x2="741" y1="331.92" y2="331.92" stroke="#93cde6" stroke-width="0.75" opacity="0.74"/><line x1="214" x2="741" y1="324.99" y2="324.99" stroke="#d8f0ee" stroke-width="0.57" opacity="0.28"/><line x1="214" x2="741" y1="318.52" y2="318.52" stroke="#93cde6" stroke-width="0.65" opacity="0.62"/><line x1="214" x2="741" y1="312.46" y2="312.46" stroke="#d8f0ee" stroke-width="0.57" opacity="0.28"/><line x1="214" x2="741" y1="306.78" y2="306.78" stroke="#93cde6" stroke-width="0.65" opacity="0.62"/><line x1="214" x2="741" y1="301.43" y2="301.43" stroke="#d8f0ee" stroke-width="0.57" opacity="0.28"/><line x1="214" x2="741" y1="296.39" y2="296.39" stroke="#c2eef0" stroke-width="0.65" opacity="0.40"/><line x1="214" x2="741" y1="287.14" y2="287.14" stroke="#cdeeea" stroke-width="0.58" opacity="0.30"/><line x1="214" x2="741" y1="278.85" y2="278.85" stroke="#cdeeea" stroke-width="0.58" opacity="0.30"/><line x1="214" x2="741" y1="271.38" y2="271.38" stroke="#cdeeea" stroke-width="0.58" opacity="0.30"/><line x1="214" x2="741" y1="264.62" y2="264.62" stroke="#e3f0e6" stroke-width="0.54" opacity="0.29"/><line x1="214" x2="741" y1="258.46" y2="258.46" stroke="#e3f0e6" stroke-width="0.54" opacity="0.29"/><line x1="214" x2="741" y1="252.83" y2="252.83" stroke="#e3f0e6" stroke-width="0.54" opacity="0.29"/><line x1="214" x2="741" y1="247.66" y2="247.66" stroke="#e3f0e6" stroke-width="0.54" opacity="0.29"/><line x1="214" x2="741" y1="242.91" y2="242.91" stroke="#e3f0e6" stroke-width="0.54" opacity="0.29"/><line x1="214" x2="741" y1="238.51" y2="238.51" stroke="#e3f0e6" stroke-width="0.54" opacity="0.29"/><line x1="214" x2="741" y1="234.44" y2="234.44" stroke="#eef3e6" stroke-width="0.48" opacity="0.26"/><line x1="214" x2="741" y1="230.66" y2="230.66" stroke="#eef3e6" stroke-width="0.48" opacity="0.26"/><line x1="214" x2="741" y1="227.13" y2="227.13" stroke="#eef3e6" stroke-width="0.48" opacity="0.25"/><line x1="214" x2="741" y1="223.84" y2="223.84" stroke="#eef3e6" stroke-width="0.48" opacity="0.23"/><line x1="214" x2="741" y1="220.76" y2="220.76" stroke="#eef3e6" stroke-width="0.48" opacity="0.21"/><line x1="214" x2="741" y1="217.87" y2="217.87" stroke="#eef3e6" stroke-width="0.48" opacity="0.19"/><line x1="214" x2="741" y1="215.15" y2="215.15" stroke="#eef3e6" stroke-width="0.48" opacity="0.18"/><line x1="214" x2="741" y1="212.59" y2="212.59" stroke="#eef3e6" stroke-width="0.48" opacity="0.17"/><line x1="214" x2="741" y1="210.18" y2="210.18" stroke="#eef3e6" stroke-width="0.48" opacity="0.15"/><line x1="214" x2="741" y1="207.90" y2="207.90" stroke="#eef3e6" stroke-width="0.48" opacity="0.14"/><line x1="214" x2="741" y1="205.74" y2="205.74" stroke="#eef3e6" stroke-width="0.48" opacity="0.13"/><line x1="214" x2="741" y1="203.70" y2="203.70" stroke="#eef3e6" stroke-width="0.48" opacity="0.12"/><line x1="214" x2="741" y1="201.76" y2="201.76" stroke="#eef3e6" stroke-width="0.48" opacity="0.11"/><line x1="214" x2="741" y1="199.91" y2="199.91" stroke="#f0f4e8" stroke-width="0.41" opacity="0.08"/><line x1="214" x2="741" y1="198.16" y2="198.16" stroke="#f0f4e8" stroke-width="0.41" opacity="0.07"/><line x1="214" x2="741" y1="196.48" y2="196.48" stroke="#f0f4e8" stroke-width="0.41" opacity="0.07"/><line x1="214" x2="741" y1="194.89" y2="194.89" stroke="#f0f4e8" stroke-width="0.41" opacity="0.06"/><line x1="214" x2="741" y1="193.37" y2="193.37" stroke="#f0f4e8" stroke-width="0.41" opacity="0.06"/><line x1="214" x2="741" y1="191.91" y2="191.91" stroke="#f0f4e8" stroke-width="0.41" opacity="0.05"/><line x1="214" x2="741" y1="190.52" y2="190.52" stroke="#f0f4e8" stroke-width="0.41" opacity="0.05"/><line x1="214" x2="741" y1="189.19" y2="189.19" stroke="#f0f4e8" stroke-width="0.41" opacity="0.05"/><line x1="214" x2="741" y1="187.91" y2="187.91" stroke="#f0f4e8" stroke-width="0.41" opacity="0.04"/><line x1="214" x2="741" y1="186.68" y2="186.68" stroke="#f0f4e8" stroke-width="0.41" opacity="0.04"/><line x1="214" x2="741" y1="185.50" y2="185.50" stroke="#f0f4e8" stroke-width="0.41" opacity="0.04"/></g>
<polygon points="215.5,260.5 295.5,220.3 295.5,260.5" fill="#1b1d1b"/>
<clipPath id="cl1"><polygon points="215.5,260.5 295.5,220.3 295.5,260.5"/></clipPath>
<path clip-path="url(#cl1)" d="M215.5 260.5 L221.5 257.5 L221.5 264.0 L215.5 267.2ZM215.5 273.9 L221.5 270.5 L221.5 277.1 L215.5 280.6ZM215.5 287.3 L221.5 283.6 L221.5 290.1 L215.5 294.0ZM221.5 264.0 L227.1 261.0 L227.1 267.4 L221.5 270.5ZM221.5 277.1 L227.1 273.7 L227.1 280.1 L221.5 283.6ZM227.1 254.6 L232.5 251.9 L232.5 258.1 L227.1 261.0ZM227.1 267.4 L232.5 264.3 L232.5 270.5 L227.1 273.7ZM227.1 280.1 L232.5 276.7 L232.5 282.9 L227.1 286.4ZM232.5 258.1 L237.7 255.4 L237.7 261.5 L232.5 264.3ZM232.5 270.5 L237.7 267.5 L237.7 273.6 L232.5 276.7ZM237.7 249.4 L242.6 246.9 L242.6 252.8 L237.7 255.4ZM237.7 261.5 L242.6 258.7 L242.6 264.6 L237.7 267.5ZM237.7 273.6 L242.6 270.5 L242.6 276.4 L237.7 279.6ZM242.6 252.8 L247.2 250.3 L247.2 256.1 L242.6 258.7ZM242.6 264.6 L247.2 261.9 L247.2 267.6 L242.6 270.5ZM247.2 244.6 L251.7 242.3 L251.7 248.0 L247.2 250.3ZM247.2 256.1 L251.7 253.6 L251.7 259.2 L247.2 261.9ZM247.2 267.6 L251.7 264.9 L251.7 270.5 L247.2 273.4ZM251.7 248.0 L255.9 245.7 L255.9 251.2 L251.7 253.6ZM251.7 259.2 L255.9 256.7 L255.9 262.2 L251.7 264.9ZM255.9 240.2 L260.0 238.1 L260.0 243.5 L255.9 245.7ZM255.9 251.2 L260.0 248.9 L260.0 254.3 L255.9 256.7ZM255.9 262.2 L260.0 259.7 L260.0 265.1 L255.9 267.8ZM260.0 243.5 L263.9 241.5 L263.9 246.7 L260.0 248.9ZM260.0 254.3 L263.9 252.0 L263.9 257.3 L260.0 259.7ZM263.9 236.2 L267.7 234.3 L267.7 239.5 L263.9 241.5ZM263.9 246.7 L267.7 244.6 L267.7 249.8 L263.9 252.0ZM263.9 257.3 L267.7 255.0 L267.7 260.2 L263.9 262.6ZM267.7 239.5 L271.3 237.6 L271.3 242.6 L267.7 244.6ZM267.7 249.8 L271.3 247.7 L271.3 252.8 L267.7 255.0ZM271.3 232.5 L274.7 230.7 L274.7 235.7 L271.3 237.6ZM271.3 242.6 L274.7 240.7 L274.7 245.7 L271.3 247.7ZM271.3 252.8 L274.7 250.6 L274.7 255.6 L271.3 257.8ZM274.7 235.7 L278.0 234.0 L278.0 238.8 L274.7 240.7ZM274.7 245.7 L278.0 243.7 L278.0 248.6 L274.7 250.6ZM278.0 229.1 L281.2 227.5 L281.2 232.3 L278.0 234.0ZM278.0 238.8 L281.2 237.0 L281.2 241.8 L278.0 243.7ZM278.0 248.6 L281.2 246.6 L281.2 251.4 L278.0 253.5ZM281.2 232.3 L284.3 230.6 L284.3 235.3 L281.2 237.0ZM281.2 241.8 L284.3 240.0 L284.3 244.7 L281.2 246.6ZM284.3 225.9 L287.2 224.4 L287.2 229.1 L284.3 230.6ZM284.3 235.3 L287.2 233.7 L287.2 238.3 L284.3 240.0ZM284.3 244.7 L287.2 242.9 L287.2 247.5 L284.3 249.4ZM287.2 229.1 L290.1 227.5 L290.1 232.1 L287.2 233.7ZM287.2 238.3 L290.1 236.6 L290.1 241.1 L287.2 242.9ZM290.1 223.0 L292.8 221.6 L292.8 226.1 L290.1 227.5ZM290.1 232.1 L292.8 230.5 L292.8 235.0 L290.1 236.6ZM290.1 241.1 L292.8 239.4 L292.8 243.8 L290.1 245.6ZM292.8 226.1 L295.5 224.7 L295.5 229.0 L292.8 230.5ZM292.8 235.0 L295.5 233.4 L295.5 237.8 L292.8 239.4Z" fill="#363a36"/>
<rect x="295.5" y="220.3" width="358" height="40.4" fill="url(#brickb)"/>
<rect x="295.5" y="219.7" width="358.5" height="1" fill="#b9ad9e"/>
<polygon points="383.4,220.5 384.8,260.5 345,260.5" fill="#2b2f2c"/>
<rect x="381.5" y="231" width="0.9" height="5" fill="#0c0d0c"/>
<rect x="375.8" y="238" width="0.9" height="5" fill="#0c0d0c"/>
<rect x="369.2" y="245" width="0.9" height="6" fill="#0c0d0c"/>
<rect x="379.8" y="250" width="0.9" height="6" fill="#0c0d0c"/>
<rect x="360.2" y="254" width="0.9" height="6" fill="#0c0d0c"/>
<rect x="373.2" y="256" width="0.9" height="4" fill="#0c0d0c"/>
<polygon points="257.9,240 361,240 341,260.5 257.9,260.5" fill="#afa1a0"/>
<path d="M273 249.6 l1.5 2 l-0.7 1.1 l0.7 1.1 l-1.5 2 l-1.5 -2 l0.7 -1.1 l-0.7 -1.1z" fill="#7a7076" opacity="0.85"/>
<path d="M305 249.6 l1.5 2 l-0.7 1.1 l0.7 1.1 l-1.5 2 l-1.5 -2 l0.7 -1.1 l-0.7 -1.1z" fill="#7a7076" opacity="0.85"/>
<path d="M338.2 249.6 l1.5 2 l-0.7 1.1 l0.7 1.1 l-1.5 2 l-1.5 -2 l0.7 -1.1 l-0.7 -1.1z" fill="#7a7076" opacity="0.85"/>
<rect x="257.5" y="239.4" width="104" height="1.2" fill="#dcd6d2"/>
<polygon points="552.4,220.3 551,260.5 585,260.5 554,220.3" fill="#d3d8d8"/>
<rect x="554.6" y="233" width="0.7" height="4.4" fill="#a9b8c4" opacity="0.8"/>
<rect x="557.6" y="240" width="0.7" height="4.4" fill="#a9b8c4" opacity="0.8"/>
<rect x="562" y="245" width="0.7" height="4.4" fill="#a9b8c4" opacity="0.8"/>
<rect x="566.8" y="249" width="0.7" height="4.4" fill="#a9b8c4" opacity="0.8"/>
<rect x="555" y="250" width="0.7" height="4.4" fill="#a9b8c4" opacity="0.8"/>
<rect x="560" y="254" width="0.7" height="4.4" fill="#a9b8c4" opacity="0.8"/>
<rect x="570.4" y="254" width="0.7" height="4.4" fill="#a9b8c4" opacity="0.8"/>
<polygon points="654,220.3 650.4,260.5 732,260.5 655,220.3" fill="#d5d9d8"/>
<rect x="662.3" y="234.6" width="0.9" height="5" fill="#8397aa" opacity="0.9"/>
<rect x="673.8" y="240.6" width="0.9" height="5" fill="#8397aa" opacity="0.9"/>
<rect x="686.4" y="247.2" width="0.9" height="5" fill="#8397aa" opacity="0.9"/>
<rect x="655.4" y="245.4" width="0.9" height="5" fill="#8397aa" opacity="0.9"/>
<rect x="666" y="252" width="0.9" height="5" fill="#8397aa" opacity="0.9"/>
<rect x="701.5" y="255.6" width="0.9" height="5" fill="#8397aa" opacity="0.9"/>
<g fill="#f7f7f5">
<polygon points="214,260.2 214,261.4 216.6,260.6 295.8,220.8 294,219.6"/>
<polygon points="380.4,219.8 383.6,219.8 345.6,260.5 340,260.5"/>
<polygon points="553,219.8 556.6,219.8 588.6,260.5 583.2,260.5"/>
<polygon points="653.4,219.8 655.6,219.6 735,260.9 731,260.9"/>
</g>
<polygon points="214.4,260.5 734,260.5 723.4,347.3 225,347.3" fill="url(#brick)"/>
<polygon points="214,260.5 338.8,260.5 344.6,347.3 225,347.3 214,262" fill="#9aa89a"/>
<g><path d="M214.6 261.1 L221.0 261.1 L221.8 267.3 L215.4 267.3Z" fill="#4f4641"/><path d="M216.3 274.4 L222.6 274.4 L223.4 280.6 L217.0 280.6Z" fill="#42474c"/><path d="M217.9 287.7 L224.2 287.7 L224.9 293.9 L218.7 293.9Z" fill="#4b4742"/><path d="M219.5 301.0 L225.8 301.0 L226.5 307.2 L220.3 307.2Z" fill="#514640"/><path d="M221.1 314.3 L227.4 314.3 L228.1 320.5 L221.9 320.5Z" fill="#4a4743"/><path d="M222.8 327.6 L229.0 327.6 L229.7 333.8 L223.5 333.8Z" fill="#424340"/><path d="M224.4 340.9 L230.6 340.9 L231.3 347.1 L225.2 347.1Z" fill="#514640"/><path d="M222.2 267.7 L228.6 267.7 L229.3 274.0 L223.0 274.0Z" fill="#3f4240"/><path d="M223.8 281.0 L230.1 281.0 L230.9 287.3 L224.6 287.3Z" fill="#4f4641"/><path d="M225.4 294.3 L231.7 294.3 L232.4 300.6 L226.1 300.6Z" fill="#4f4641"/><path d="M227.0 307.6 L233.2 307.6 L234.0 313.9 L227.7 313.9Z" fill="#514640"/><path d="M228.6 320.9 L234.8 320.9 L235.5 327.2 L229.3 327.2Z" fill="#514640"/><path d="M230.2 334.2 L236.3 334.2 L237.1 340.5 L230.9 340.5Z" fill="#41464b"/><path d="M228.2 261.1 L234.6 261.1 L235.3 267.3 L229.0 267.3Z" fill="#42474c"/><path d="M229.8 274.4 L236.1 274.4 L236.8 280.6 L230.5 280.6Z" fill="#4f4641"/><path d="M231.3 287.7 L237.6 287.7 L238.3 293.9 L232.0 293.9Z" fill="#42474c"/><path d="M232.9 301.0 L239.1 301.0 L239.9 307.2 L233.6 307.2Z" fill="#41464b"/><path d="M234.4 314.3 L240.7 314.3 L241.4 320.5 L235.1 320.5Z" fill="#424340"/><path d="M236.0 327.6 L242.2 327.6 L242.9 333.8 L236.7 333.8Z" fill="#4a4743"/><path d="M237.5 340.9 L243.7 340.9 L244.4 347.1 L238.2 347.1Z" fill="#42474c"/><path d="M235.8 267.7 L242.1 267.7 L242.8 274.0 L236.5 274.0Z" fill="#424340"/><path d="M237.3 281.0 L243.6 281.0 L244.3 287.3 L238.0 287.3Z" fill="#3f4240"/><path d="M238.8 294.3 L245.1 294.3 L245.8 300.6 L239.5 300.6Z" fill="#424340"/><path d="M240.3 307.6 L246.6 307.6 L247.2 313.9 L241.0 313.9Z" fill="#3f4240"/><path d="M241.8 320.9 L248.0 320.9 L248.7 327.2 L242.5 327.2Z" fill="#514640"/><path d="M243.3 334.2 L249.5 334.2 L250.2 340.5 L244.0 340.5Z" fill="#41464b"/><path d="M241.8 261.1 L248.2 261.1 L248.9 267.3 L242.5 267.3Z" fill="#41464b"/><path d="M243.3 274.4 L249.6 274.4 L250.3 280.6 L244.0 280.6Z" fill="#41464b"/><path d="M244.8 287.7 L251.1 287.7 L251.7 293.9 L245.4 293.9Z" fill="#514640"/><path d="M246.2 301.0 L252.5 301.0 L253.2 307.2 L246.9 307.2Z" fill="#42474c"/><path d="M247.7 314.3 L253.9 314.3 L254.6 320.5 L248.4 320.5Z" fill="#4b4742"/><path d="M249.2 327.6 L255.4 327.6 L256.0 333.8 L249.8 333.8Z" fill="#4a4743"/><path d="M250.6 340.9 L256.8 340.9 L257.5 347.1 L251.3 347.1Z" fill="#424340"/><path d="M249.3 267.7 L255.7 267.7 L256.4 274.0 L250.0 274.0Z" fill="#42474c"/><path d="M250.8 281.0 L257.1 281.0 L257.7 287.3 L251.4 287.3Z" fill="#514640"/><path d="M252.2 294.3 L258.5 294.3 L259.1 300.6 L252.9 300.6Z" fill="#4f4641"/><path d="M253.6 307.6 L259.9 307.6 L260.5 313.9 L254.3 313.9Z" fill="#3f4240"/><path d="M255.0 320.9 L261.3 320.9 L261.9 327.2 L255.7 327.2Z" fill="#41464b"/><path d="M256.5 334.2 L262.6 334.2 L263.3 340.5 L257.1 340.5Z" fill="#3f4240"/><path d="M255.4 261.1 L261.8 261.1 L262.4 267.3 L256.1 267.3Z" fill="#41464b"/><path d="M256.8 274.4 L263.2 274.4 L263.8 280.6 L257.5 280.6Z" fill="#41464b"/><path d="M258.2 287.7 L264.5 287.7 L265.1 293.9 L258.8 293.9Z" fill="#4b4742"/><path d="M259.6 301.0 L265.8 301.0 L266.5 307.2 L260.2 307.2Z" fill="#41464b"/><path d="M261.0 314.3 L267.2 314.3 L267.8 320.5 L261.6 320.5Z" fill="#4f4641"/><path d="M262.3 327.6 L268.5 327.6 L269.2 333.8 L263.0 333.8Z" fill="#4b4742"/><path d="M263.7 340.9 L269.9 340.9 L270.5 347.1 L264.4 347.1Z" fill="#424340"/><path d="M262.9 267.7 L269.3 267.7 L269.9 274.0 L263.5 274.0Z" fill="#3f4240"/><path d="M264.2 281.0 L270.6 281.0 L271.2 287.3 L264.9 287.3Z" fill="#42474c"/><path d="M265.6 294.3 L271.9 294.3 L272.5 300.6 L266.2 300.6Z" fill="#4b4742"/><path d="M266.9 307.6 L273.2 307.6 L273.8 313.9 L267.6 313.9Z" fill="#4a4743"/><path d="M268.3 320.9 L274.5 320.9 L275.1 327.2 L268.9 327.2Z" fill="#4f4641"/><path d="M269.6 334.2 L275.8 334.2 L276.4 340.5 L270.3 340.5Z" fill="#3f4240"/><path d="M269.0 261.1 L275.4 261.1 L276.0 267.3 L269.6 267.3Z" fill="#3f4240"/><path d="M270.3 274.4 L276.7 274.4 L277.3 280.6 L270.9 280.6Z" fill="#4a4743"/><path d="M271.6 287.7 L277.9 287.7 L278.5 293.9 L272.2 293.9Z" fill="#4a4743"/><path d="M272.9 301.0 L279.2 301.0 L279.8 307.2 L273.5 307.2Z" fill="#514640"/><path d="M274.2 314.3 L280.5 314.3 L281.1 320.5 L274.8 320.5Z" fill="#514640"/><path d="M275.5 327.6 L281.7 327.6 L282.3 333.8 L276.2 333.8Z" fill="#4a4743"/><path d="M276.8 340.9 L283.0 340.9 L283.6 347.1 L277.5 347.1Z" fill="#4b4742"/><path d="M276.4 267.7 L282.8 267.7 L283.4 274.0 L277.0 274.0Z" fill="#4a4743"/><path d="M277.7 281.0 L284.0 281.0 L284.6 287.3 L278.3 287.3Z" fill="#41464b"/><path d="M279.0 294.3 L285.3 294.3 L285.8 300.6 L279.6 300.6Z" fill="#42474c"/><path d="M280.2 307.6 L286.5 307.6 L287.1 313.9 L280.8 313.9Z" fill="#424340"/><path d="M281.5 320.9 L287.7 320.9 L288.3 327.2 L282.1 327.2Z" fill="#3f4240"/><path d="M282.8 334.2 L288.9 334.2 L289.5 340.5 L283.4 340.5Z" fill="#41464b"/><path d="M282.6 261.1 L289.0 261.1 L289.5 267.3 L283.2 267.3Z" fill="#41464b"/><path d="M283.8 274.4 L290.2 274.4 L290.7 280.6 L284.4 280.6Z" fill="#4a4743"/><path d="M285.1 287.7 L291.4 287.7 L291.9 293.9 L285.6 293.9Z" fill="#424340"/><path d="M286.3 301.0 L292.6 301.0 L293.1 307.2 L286.9 307.2Z" fill="#424340"/><path d="M287.5 314.3 L293.7 314.3 L294.3 320.5 L288.1 320.5Z" fill="#41464b"/><path d="M288.7 327.6 L294.9 327.6 L295.5 333.8 L289.3 333.8Z" fill="#4b4742"/><path d="M290.0 340.9 L296.1 340.9 L296.7 347.1 L290.5 347.1Z" fill="#3f4240"/><path d="M290.0 267.7 L296.4 267.7 L296.9 274.0 L290.5 274.0Z" fill="#4f4641"/><path d="M291.2 281.0 L297.5 281.0 L298.0 287.3 L291.7 287.3Z" fill="#424340"/><path d="M292.4 294.3 L298.7 294.3 L299.2 300.6 L292.9 300.6Z" fill="#3f4240"/><path d="M293.5 307.6 L299.8 307.6 L300.3 313.9 L294.1 313.9Z" fill="#424340"/><path d="M294.7 320.9 L301.0 320.9 L301.5 327.2 L295.3 327.2Z" fill="#4a4743"/><path d="M295.9 334.2 L302.1 334.2 L302.6 340.5 L296.5 340.5Z" fill="#4a4743"/><path d="M296.2 261.1 L302.6 261.1 L303.1 267.3 L296.7 267.3Z" fill="#424340"/><path d="M297.3 274.4 L303.7 274.4 L304.2 280.6 L297.9 280.6Z" fill="#4f4641"/><path d="M298.5 287.7 L304.8 287.7 L305.3 293.9 L299.0 293.9Z" fill="#41464b"/><path d="M299.6 301.0 L305.9 301.0 L306.4 307.2 L300.2 307.2Z" fill="#3f4240"/><path d="M300.8 314.3 L307.0 314.3 L307.5 320.5 L301.3 320.5Z" fill="#3f4240"/><path d="M301.9 327.6 L308.1 327.6 L308.6 333.8 L302.5 333.8Z" fill="#42474c"/><path d="M303.1 340.9 L309.2 340.9 L309.7 347.1 L303.6 347.1Z" fill="#424340"/><path d="M303.5 267.7 L309.9 267.7 L310.4 274.0 L304.1 274.0Z" fill="#4b4742"/><path d="M304.6 281.0 L311.0 281.0 L311.5 287.3 L305.2 287.3Z" fill="#4b4742"/><path d="M305.8 294.3 L312.0 294.3 L312.6 300.6 L306.3 300.6Z" fill="#4b4742"/><path d="M306.9 307.6 L313.1 307.6 L313.6 313.9 L307.4 313.9Z" fill="#42474c"/><path d="M308.0 320.9 L314.2 320.9 L314.7 327.2 L308.5 327.2Z" fill="#41464b"/><path d="M309.1 334.2 L315.3 334.2 L315.8 340.5 L309.6 340.5Z" fill="#41464b"/><path d="M309.8 261.1 L316.2 261.1 L316.7 267.3 L310.3 267.3Z" fill="#514640"/><path d="M310.9 274.4 L317.2 274.4 L317.7 280.6 L311.4 280.6Z" fill="#41464b"/><path d="M311.9 287.7 L318.2 287.7 L318.7 293.9 L312.4 293.9Z" fill="#4a4743"/><path d="M313.0 301.0 L319.3 301.0 L319.7 307.2 L313.5 307.2Z" fill="#3f4240"/><path d="M314.0 314.3 L320.3 314.3 L320.8 320.5 L314.5 320.5Z" fill="#41464b"/><path d="M315.1 327.6 L321.3 327.6 L321.8 333.8 L315.6 333.8Z" fill="#4f4641"/><path d="M316.2 340.9 L322.3 340.9 L322.8 347.1 L316.7 347.1Z" fill="#3f4240"/><path d="M317.1 267.7 L323.5 267.7 L323.9 274.0 L317.6 274.0Z" fill="#41464b"/><path d="M318.1 281.0 L324.5 281.0 L324.9 287.3 L318.6 287.3Z" fill="#3f4240"/><path d="M319.1 294.3 L325.4 294.3 L325.9 300.6 L319.6 300.6Z" fill="#3f4240"/><path d="M320.2 307.6 L326.4 307.6 L326.9 313.9 L320.7 313.9Z" fill="#4b4742"/><path d="M321.2 320.9 L327.4 320.9 L327.9 327.2 L321.7 327.2Z" fill="#424340"/><path d="M322.2 334.2 L328.4 334.2 L328.9 340.5 L322.7 340.5Z" fill="#41464b"/><path d="M323.4 261.1 L329.8 261.1 L330.2 267.3 L323.8 267.3Z" fill="#4b4742"/><path d="M324.4 274.4 L330.7 274.4 L331.2 280.6 L324.8 280.6Z" fill="#424340"/><path d="M325.4 287.7 L331.7 287.7 L332.1 293.9 L325.8 293.9Z" fill="#41464b"/><path d="M326.3 301.0 L332.6 301.0 L333.1 307.2 L326.8 307.2Z" fill="#42474c"/><path d="M327.3 314.3 L333.6 314.3 L334.0 320.5 L327.8 320.5Z" fill="#424340"/><path d="M328.3 327.6 L334.5 327.6 L334.9 333.8 L328.8 333.8Z" fill="#4b4742"/><path d="M329.3 340.9 L335.4 340.9 L335.9 347.1 L329.7 347.1Z" fill="#514640"/><path d="M330.7 267.7 L337.0 267.7 L337.4 274.0 L331.1 274.0Z" fill="#4b4742"/><path d="M331.6 281.0 L337.9 281.0 L338.4 287.3 L332.0 287.3Z" fill="#4b4742"/><path d="M332.5 294.3 L338.8 294.3 L339.3 300.6 L333.0 300.6Z" fill="#3f4240"/><path d="M333.5 307.6 L339.7 307.6 L340.2 313.9 L333.9 313.9Z" fill="#514640"/><path d="M334.4 320.9 L340.6 320.9 L341.1 327.2 L334.9 327.2Z" fill="#424340"/><path d="M335.4 334.2 L341.6 334.2 L342.0 340.5 L335.8 340.5Z" fill="#424340"/><path d="M337.0 261.1 L338.8 261.1 L339.2 267.3 L337.4 267.3Z" fill="#424340"/><path d="M337.9 274.4 L339.7 274.4 L340.1 280.6 L338.3 280.6Z" fill="#4b4742"/><path d="M338.8 287.7 L340.6 287.7 L341.0 293.9 L339.2 293.9Z" fill="#3f4240"/><path d="M339.7 301.0 L341.5 301.0 L341.9 307.2 L340.1 307.2Z" fill="#514640"/><path d="M340.6 314.3 L342.4 314.3 L342.8 320.5 L341.0 320.5Z" fill="#3f4240"/><path d="M341.5 327.6 L343.3 327.6 L343.7 333.8 L341.9 333.8Z" fill="#4b4742"/><path d="M342.4 340.9 L344.2 340.9 L344.6 347.1 L342.8 347.1Z" fill="#42474c"/></g>
<rect x="214" y="259.5" width="520.6" height="1.5" fill="#f7f7f5"/>
<g id="nav">
<circle cx="282.4" cy="373.8" r="29.2" fill="#2f69ad"/>
<path d="M261.75 353.15 A29.2 29.2 0 0 1 303.05 353.15 L292.30 363.90 A14 14 0 0 0 272.50 363.90Z" fill="#1c4e94"/>
<path d="M303.05 394.45 A29.2 29.2 0 0 1 261.75 394.45 L272.50 383.70 A14 14 0 0 0 292.30 383.70Z" fill="#1c4e94"/>
<circle cx="282.4" cy="373.8" r="28.7" fill="none" stroke="#2a5f9f" stroke-width="1"/>
<line x1="292.30" y1="383.70" x2="303.05" y2="394.45" stroke="#5a8cc4" stroke-width="0.8"/>
<line x1="272.50" y1="383.70" x2="261.75" y2="394.45" stroke="#5a8cc4" stroke-width="0.8"/>
<line x1="272.50" y1="363.90" x2="261.75" y2="353.15" stroke="#5a8cc4" stroke-width="0.8"/>
<line x1="292.30" y1="363.90" x2="303.05" y2="353.15" stroke="#5a8cc4" stroke-width="0.8"/>
<circle cx="282.4" cy="373.8" r="14.6" fill="#1b3f7a"/>
<circle cx="282.4" cy="373.8" r="13.2" fill="#214987" stroke="#16345f" stroke-width="0.7"/>
<rect x="276.59999999999997" y="368.0" width="11.6" height="11.6" fill="#183a72" stroke="#102c5a" stroke-width="0.5"/>
<path d="M277.79999999999995 366.8 L282.4 362.40000000000003 L287.0 366.8Z M277.79999999999995 380.8 L282.4 385.2 L287.0 380.8Z M275.4 369.2 L271.0 373.8 L275.4 378.40000000000003Z M289.4 369.2 L293.79999999999995 373.8 L289.4 378.40000000000003Z" fill="#b3bfd2"/>
<path d="M282.4 348.00 L278.70 352.40 H280.65 V357.00 H284.15 V352.40 H286.10Z" fill="#c0cfe4"/>
<path d="M282.4 400.60 L278.70 396.20 H280.65 V391.60 H284.15 V396.20 H286.10Z" fill="#c0cfe4"/>
<path d="M266.0 368.40000000000003 A6.4 6.4 0 1 0 265.0 380.40000000000003" fill="none" stroke="#b7c8e0" stroke-width="2.6"/>
<path d="M262.79999999999995 365.2 L268.0 365.6 L267.0 371.2Z" fill="#b7c8e0"/>
<path d="M298.79999999999995 368.40000000000003 A6.4 6.4 0 1 1 299.79999999999995 380.40000000000003" fill="none" stroke="#b7c8e0" stroke-width="2.6"/>
<path d="M302.0 365.2 L296.79999999999995 365.6 L297.79999999999995 371.2Z" fill="#b7c8e0"/>
<circle cx="271" cy="338" r="6.2" fill="#1c3d74" stroke="#2a4f8e" stroke-width="0.5"/>
<rect x="267.8" y="336.9" width="6.4" height="2.2" rx="0.5" fill="#fff"/>
<circle cx="292.5" cy="338" r="6.2" fill="#1c3d74" stroke="#2a4f8e" stroke-width="0.5"/>
<path d="M289.3 336.9h2.1v-2.1h2.2v2.1h2.1v2.2h-2.1v2.1h-2.2v-2.1h-2.1z" fill="#fff"/>
<circle cx="254.5" cy="348" r="6.2" fill="#1c3d74" stroke="#2a4f8e" stroke-width="0.5"/>
<text x="254.5" y="351.6" font-family="Liberation Sans, sans-serif" font-weight="bold" font-size="10" fill="#fff" text-anchor="middle">?</text>
<circle cx="310" cy="347.5" r="6.2" fill="#1c3d74" stroke="#2a4f8e" stroke-width="0.5"/>
<path d="M306 345.6h1.8l0.8-1.2h2.8l0.8 1.2h1.8v5h-8z" fill="#fff"/><circle cx="310" cy="348" r="1.5" fill="#1c3d74"/>
<circle cx="244" cy="364.5" r="6.2" fill="#1c3d74" stroke="#2a4f8e" stroke-width="0.5"/>
<circle cx="244" cy="364.5" r="3.6" fill="none" stroke="#fff" stroke-width="1.1" stroke-dasharray="4 1.65"/><circle cx="244" cy="364.5" r="1.5" fill="#fff"/>
<circle cx="320" cy="364.5" r="6.2" fill="#1c3d74" stroke="#2a4f8e" stroke-width="0.5"/>
<path d="M320 360.59 L316.86 364.33 H318.51 V368.24 H321.49 V364.33 H323.14Z" fill="#fff"/>
<circle cx="244" cy="382" r="6.2" fill="#3c93d6" stroke="#2a4f8e" stroke-width="0.5"/>
<ellipse cx="244" cy="381.6" rx="4" ry="1.9" fill="none" stroke="#fff" stroke-width="1"/><path d="M242.2 384.6l2.4-1.6v3z" fill="#fff"/>
<circle cx="320" cy="382" r="6.2" fill="#1c3d74" stroke="#2a4f8e" stroke-width="0.5"/>
<path d="M320 385.91 L316.86 382.17 H318.51 V378.26 H321.49 V382.17 H323.14Z" fill="#fff"/>
</g>
</svg></div>
<div id="info" class="abs"><em>左击</em> 鼠标将对象放入项目<span style="margin:0 2.6px"> • </span>按住 <em>Shift</em> 放置多个对象</div>
<div class="abs" style="left:709px;top:405px;width:27px;height:15px;background:#3a4067"></div><div id="rt" class="abs"><div class="rb" style="top:2.5px"><svg width="22.2" height="20.3" viewBox="0 0 22.2 20.3"><g transform="translate(-0.9 -0.6) scale(1.09)"><path d="M7.4 10.6 C6.3 9.6 4.9 8.6 4.1 9.3 C3.4 10 4.3 10.9 5 11.7 L8 15.6 C8.8 16.8 9.8 17.4 11.2 17.4 H14.6 C16.6 17.4 17.6 16 17.7 14 L17.9 6.2 C17.9 4.9 16 4.9 15.9 6.2 L15.8 3.4 C15.7 2 13.7 2 13.7 3.4 V2.4 C13.6 1 11.5 1 11.5 2.4 V3.2 C11.4 1.9 9.4 1.9 9.4 3.3 L9.4 11.5Z M11.5 3 V8.6 M13.7 3.2 V8.6 M15.85 5.6 V9" fill="#fff" stroke="#333" stroke-width="0.9" stroke-linejoin="round"/></g></svg></div><div class="rb dis" style="top:27.2px"><svg width="22.2" height="20.3" viewBox="0 0 22.2 20.3"><path d="M2.8 9.2 L10 3 V6.6 C16 6.6 19 10.6 18.4 17 C17 13.2 14.6 11.8 10 12 V15.6Z" fill="#8eb0da"/></svg></div><div class="rb dis" style="top:51.9px"><svg width="22.2" height="20.3" viewBox="0 0 22.2 20.3"><path d="M19.4 9.2 L12.2 3 V6.6 C6.2 6.6 3.2 10.6 3.8 17 C5.2 13.2 7.6 11.8 12.2 12 V15.6Z" fill="#8eb0da"/></svg></div><div class="rb" style="top:76.7px"><svg width="22.2" height="20.3" viewBox="0 0 22.2 20.3"><path d="M4.2 3 L18 17.4 M18 3 L4.2 17.4" stroke="#d32a24" stroke-width="4.5" stroke-linecap="butt"/></svg></div><div class="rb dis" style="top:101.4px"><svg width="22.2" height="20.3" viewBox="0 0 22.2 20.3"><rect x="3.6" y="4.6" width="10" height="12.6" fill="#a7acbe" stroke="#c9cdd9" stroke-width="0.6"/><path d="M8.2 2.6 H15 L18.6 6 V15.6 H8.2Z" fill="#b6bacb" stroke="#d2d5e0" stroke-width="0.6"/><path d="M15 2.6 V6 H18.6" fill="none" stroke="#d2d5e0" stroke-width="0.6"/></svg></div><div class="rb" style="top:126.1px"><svg width="22.2" height="20.3" viewBox="0 0 22.2 20.3"><defs><radialGradient id="gga" cx="0.5" cy="0.55" r="0.6"><stop offset="0.45" stop-color="#5fb56a" stop-opacity="0.75"/><stop offset="1" stop-color="#fff" stop-opacity="0"/></radialGradient></defs><rect x="0.5" y="2" width="21.2" height="17.5" fill="url(#gga)"/><path d="M2.6 7.4 L10.6 4 L19.6 7.6 L19.4 14.4 L11.6 18.2 L2.8 13.8Z" fill="#7b8081"/><path d="M2.6 7.4 L10.6 4 L19.6 7.6 L11.8 11.4Z" fill="#a3a8a8"/><path d="M5.4 7.5 L10.6 5.4 L16.8 7.8 L11.8 10.1Z" fill="#34393a"/><path d="M11.8 11.4 L19.6 7.6 L19.4 14.4 L11.6 18.2Z" fill="#5c6366"/></svg></div><div class="rb" style="top:150.8px"><svg width="22.2" height="20.3" viewBox="0 0 22.2 20.3"><defs><radialGradient id="ggb" cx="0.5" cy="0.55" r="0.6"><stop offset="0.45" stop-color="#5fb56a" stop-opacity="0.75"/><stop offset="1" stop-color="#fff" stop-opacity="0"/></radialGradient></defs><rect x="0.5" y="2" width="21.2" height="17.5" fill="url(#ggb)"/><path d="M2.8 11.6 L7.3 4.4 L14.2 9.2 L8.8 16.2Z" fill="#94502f"/><path d="M7.3 4.4 L14.2 9.2 L11.4 12.8 L5 8Z" fill="#a65c37" opacity="0.7"/><path d="M14.2 9.2 L19.4 11 L8.8 16.2Z" fill="#4e2a1a"/><path d="M2.8 11.6 L8.8 16.2 L8.8 16.9 L2.8 12.3Z" fill="#5c321f"/></svg></div><div class="rb dis" style="top:175.5px"><svg width="22.2" height="20.3" viewBox="0 0 22.2 20.3"><circle cx="7" cy="8.6" r="2.7" fill="#cf8d9f" opacity="0.9"/><path d="M13.6 4.4 L16 11 H11.2Z" fill="#7897d2" opacity="0.95"/><path d="M7.2 12.4 L10.4 11.2 L13 12.4 V15.8 L9.8 17.2 L7.2 15.8Z" fill="#7fb3a2" opacity="0.95"/><path d="M7.2 12.4 L9.8 13.6 L13 12.4 M9.8 13.6 V17.2" stroke="#6a9c8c" stroke-width="0.4" fill="none"/></svg></div><div class="rb" style="top:200.3px"><svg width="22.2" height="20.3" viewBox="0 0 22.2 20.3"><path d="M12.8 3.2 C16.4 2.8 19 5.2 18.6 8.6 L20.4 8.4 L17.4 11.8 L14.8 8.8 L16.4 8.8 C16.4 6.6 15 5.4 12.8 5.4Z" fill="#3fa544"/><path d="M9.4 18 C5.8 18.4 3.4 16.2 3.8 12.8 L2 13 L5 9.8 L7.6 12.6 L6 12.6 C6 14.8 7.4 15.8 9.4 15.8Z" fill="#3fa544"/><rect x="2.2" y="3.4" width="9.8" height="6.2" fill="#333" stroke="#c4c4c4" stroke-width="0.7"/><text x="7.1" y="8.5" font-family="Liberation Sans, sans-serif" font-weight="bold" font-size="5.4" text-anchor="middle" fill="#fff">2D</text><path d="M9.6 12 L13.6 9.8 L19.8 11 L16 13.4Z" fill="#ededed" stroke="#777" stroke-width="0.4"/><path d="M9.6 12 L16 13.4 V19 L9.6 17.4Z" fill="#4a4a4a"/><path d="M16 13.4 L19.8 11 V16.4 L16 19Z" fill="#2e2e2e"/><text x="12.9" y="17.4" font-family="Liberation Sans, sans-serif" font-weight="bold" font-size="4.6" text-anchor="middle" fill="#fff">3</text><text x="17.9" y="16.6" font-family="Liberation Sans, sans-serif" font-weight="bold" font-size="4.2" text-anchor="middle" fill="#fff">D</text></svg></div><div class="rb" style="top:225.0px"><svg width="22.2" height="20.3" viewBox="0 0 22.2 20.3"><defs><radialGradient id="ggc" cx="0.5" cy="0.55" r="0.6"><stop offset="0.45" stop-color="#5fb56a" stop-opacity="0.75"/><stop offset="1" stop-color="#fff" stop-opacity="0"/></radialGradient></defs><rect x="0.5" y="2" width="21.2" height="17.5" fill="url(#ggc)"/><rect x="3.4" y="3.6" width="15.6" height="13.2" fill="#6db1f3"/><path d="M3.4 16.8 L19 16.8 L19 5.6 C14 9.4 8 13.2 3.4 16.8Z" fill="#2fae35"/><path d="M6 3.6V16.8 M8.6 3.6V16.8 M11.2 3.6V16.8 M13.8 3.6V16.8 M16.4 3.6V16.8 M3.4 6.2H19 M3.4 8.8H19 M3.4 11.4H19 M3.4 14H19" stroke="#fff" stroke-width="0.75" fill="none" opacity="0.9"/><path d="M3.4 16.8 L19 16.8 L19 5.6 C14 9.4 8 13.2 3.4 16.8Z" fill="#2fae35" opacity="0.72"/><rect x="3.4" y="3.6" width="15.6" height="13.2" fill="none" stroke="#fff" stroke-width="0.6"/></svg></div><div class="rb" style="top:249.7px"><svg width="22.2" height="20.3" viewBox="0 0 22.2 20.3"><path d="M3.6 3 H7.6 V10.8 C7.6 15 14.6 15 14.6 10.8 V3 H18.6 V10.8 C18.6 20.4 3.6 20.4 3.6 10.8Z" fill="#b3221f" stroke="#7d1715" stroke-width="0.5"/><path d="M4.9 5.6 V11 C4.9 18.2 17.2 18.4 17.4 11.2" fill="none" stroke="#de6259" stroke-width="0.9" opacity="0.75"/><rect x="3.6" y="3" width="4" height="2.2" fill="#ecc4c0"/><rect x="14.6" y="3" width="4" height="2.2" fill="#ecc4c0"/></svg></div><div class="rb" style="top:274.4px"><svg width="22.2" height="20.3" viewBox="0 0 22.2 20.3"><defs><radialGradient id="ggd" cx="0.5" cy="0.55" r="0.6"><stop offset="0.45" stop-color="#5fb56a" stop-opacity="0.75"/><stop offset="1" stop-color="#fff" stop-opacity="0"/></radialGradient></defs><rect x="0.5" y="2" width="21.2" height="17.5" fill="url(#ggd)"/><rect x="3.6" y="4" width="15" height="12.6" fill="#fbfbfb" stroke="#8a9a92" stroke-width="0.6"/><path d="M3.6 7.2H18.6 M11 7.2V16.6 M14.8 7.2V16.6 M7.4 7.2V16.6" stroke="#7aa2d8" stroke-width="0.7" fill="none"/><path d="M7 2.6V18 M2.6 7H19.6" stroke="#e44be0" stroke-width="1.3" fill="none"/></svg></div><div class="rb" style="top:299.1px"><svg width="22.2" height="20.3" viewBox="0 0 22.2 20.3"><defs><radialGradient id="gge" cx="0.5" cy="0.55" r="0.6"><stop offset="0.45" stop-color="#5fb56a" stop-opacity="0.75"/><stop offset="1" stop-color="#fff" stop-opacity="0"/></radialGradient></defs><rect x="0.5" y="2" width="21.2" height="17.5" fill="url(#gge)"/><circle cx="11.1" cy="10.4" r="6.6" fill="#7d8584"/><circle cx="11.1" cy="10.4" r="5.1" fill="#f2f4f3"/><path d="M11.1 4.8V6.2 M11.1 14.6V16 M5.5 10.4H6.9 M15.3 10.4H16.7" stroke="#555" stroke-width="0.8"/><path d="M14 7 L11.9 11.2 L10.3 9.6Z" fill="#d8262a"/><path d="M8.2 13.8 L10.3 9.6 L11.9 11.2Z" fill="#4a4f55"/></svg></div><div class="rb dis" style="top:323.9px"><svg width="22.2" height="20.3" viewBox="0 0 22.2 20.3"><rect x="3.4" y="4.6" width="15.4" height="11.6" fill="#99a0b6" stroke="#6f7896" stroke-width="0.8"/><text x="8.2" y="14.4" font-family="Liberation Serif, serif" font-weight="bold" font-size="10.5" text-anchor="middle" fill="#6a7390">T</text><circle cx="14.2" cy="11.4" r="2.5" fill="#a9b0c4" stroke="#6a7390" stroke-width="1"/><path d="M16 13.2 L18.2 15.4" stroke="#6a7390" stroke-width="1.3"/></svg></div></div>
<div id="status" class="abs"><span class="abs" style="left:6px;top:0.4px">DreamPlan 加</span>
<div class="abs" style="left:516px;top:1.4px;width:63.4px;height:11.6px;background:#fff;border:0.5px solid #c4c4c4;border-radius:2.5px;font-size:7.4px;line-height:10.6px;padding-left:4.6px;color:#222">747%</div>
<div class="abs" style="left:569px;top:1.4px;width:10.4px;height:11.6px;border-radius:0 2.5px 2.5px 0;background:linear-gradient(#4f96f6,#1f6be8)"></div>
<svg class="abs" style="left:569px;top:1.2px" width="10.4" height="12" viewBox="0 0 10.4 12"><path d="M3.2 5 L5.2 7 L7.2 5" fill="none" stroke="#fff" stroke-width="1.1" stroke-linecap="round" stroke-linejoin="round"/></svg>
<svg class="abs" style="left:584px;top:-1.1px" width="152" height="16" viewBox="616 441.5 152 16">
<circle cx="623.6" cy="449.6" r="4.1" fill="#ececec" stroke="#8e8e8e" stroke-width="0.6"/><rect x="621.3" y="449.1" width="4.6" height="1" fill="#4a4a4a"/>
<rect x="636.4" y="448.6" width="110" height="1.4" rx="0.7" fill="#bdbdbd"/>
<g fill="#a9a9a9"><rect x="641.2" y="454" width="0.6" height="1.6"/><rect x="652.3" y="454" width="0.6" height="1.6"/><rect x="663.5" y="454" width="0.6" height="1.6"/><rect x="674.6" y="454" width="0.6" height="1.6"/><rect x="685.7" y="454" width="0.6" height="1.6"/><rect x="696.9" y="454" width="0.6" height="1.6"/><rect x="708.0" y="454" width="0.6" height="1.6"/><rect x="719.1" y="454" width="0.6" height="1.6"/><rect x="730.2" y="454" width="0.6" height="1.6"/><rect x="741.4" y="454" width="0.6" height="1.6"/></g>
<path d="M712.8 445 H719.2 Q720.2 445 720.2 446 V450 L716 454.2 L711.8 450 V446 Q711.8 445 712.8 445Z" fill="#fff" stroke="#bdbdbd" stroke-width="0.5"/>
<circle cx="758.6" cy="449.6" r="4.1" fill="#ececec" stroke="#8e8e8e" stroke-width="0.6"/><path d="M756.2 449.6H761M758.6 447.2V452" stroke="#4a4a4a" stroke-width="1"/>
</svg>
</div>
</div></div>
</body></html>
